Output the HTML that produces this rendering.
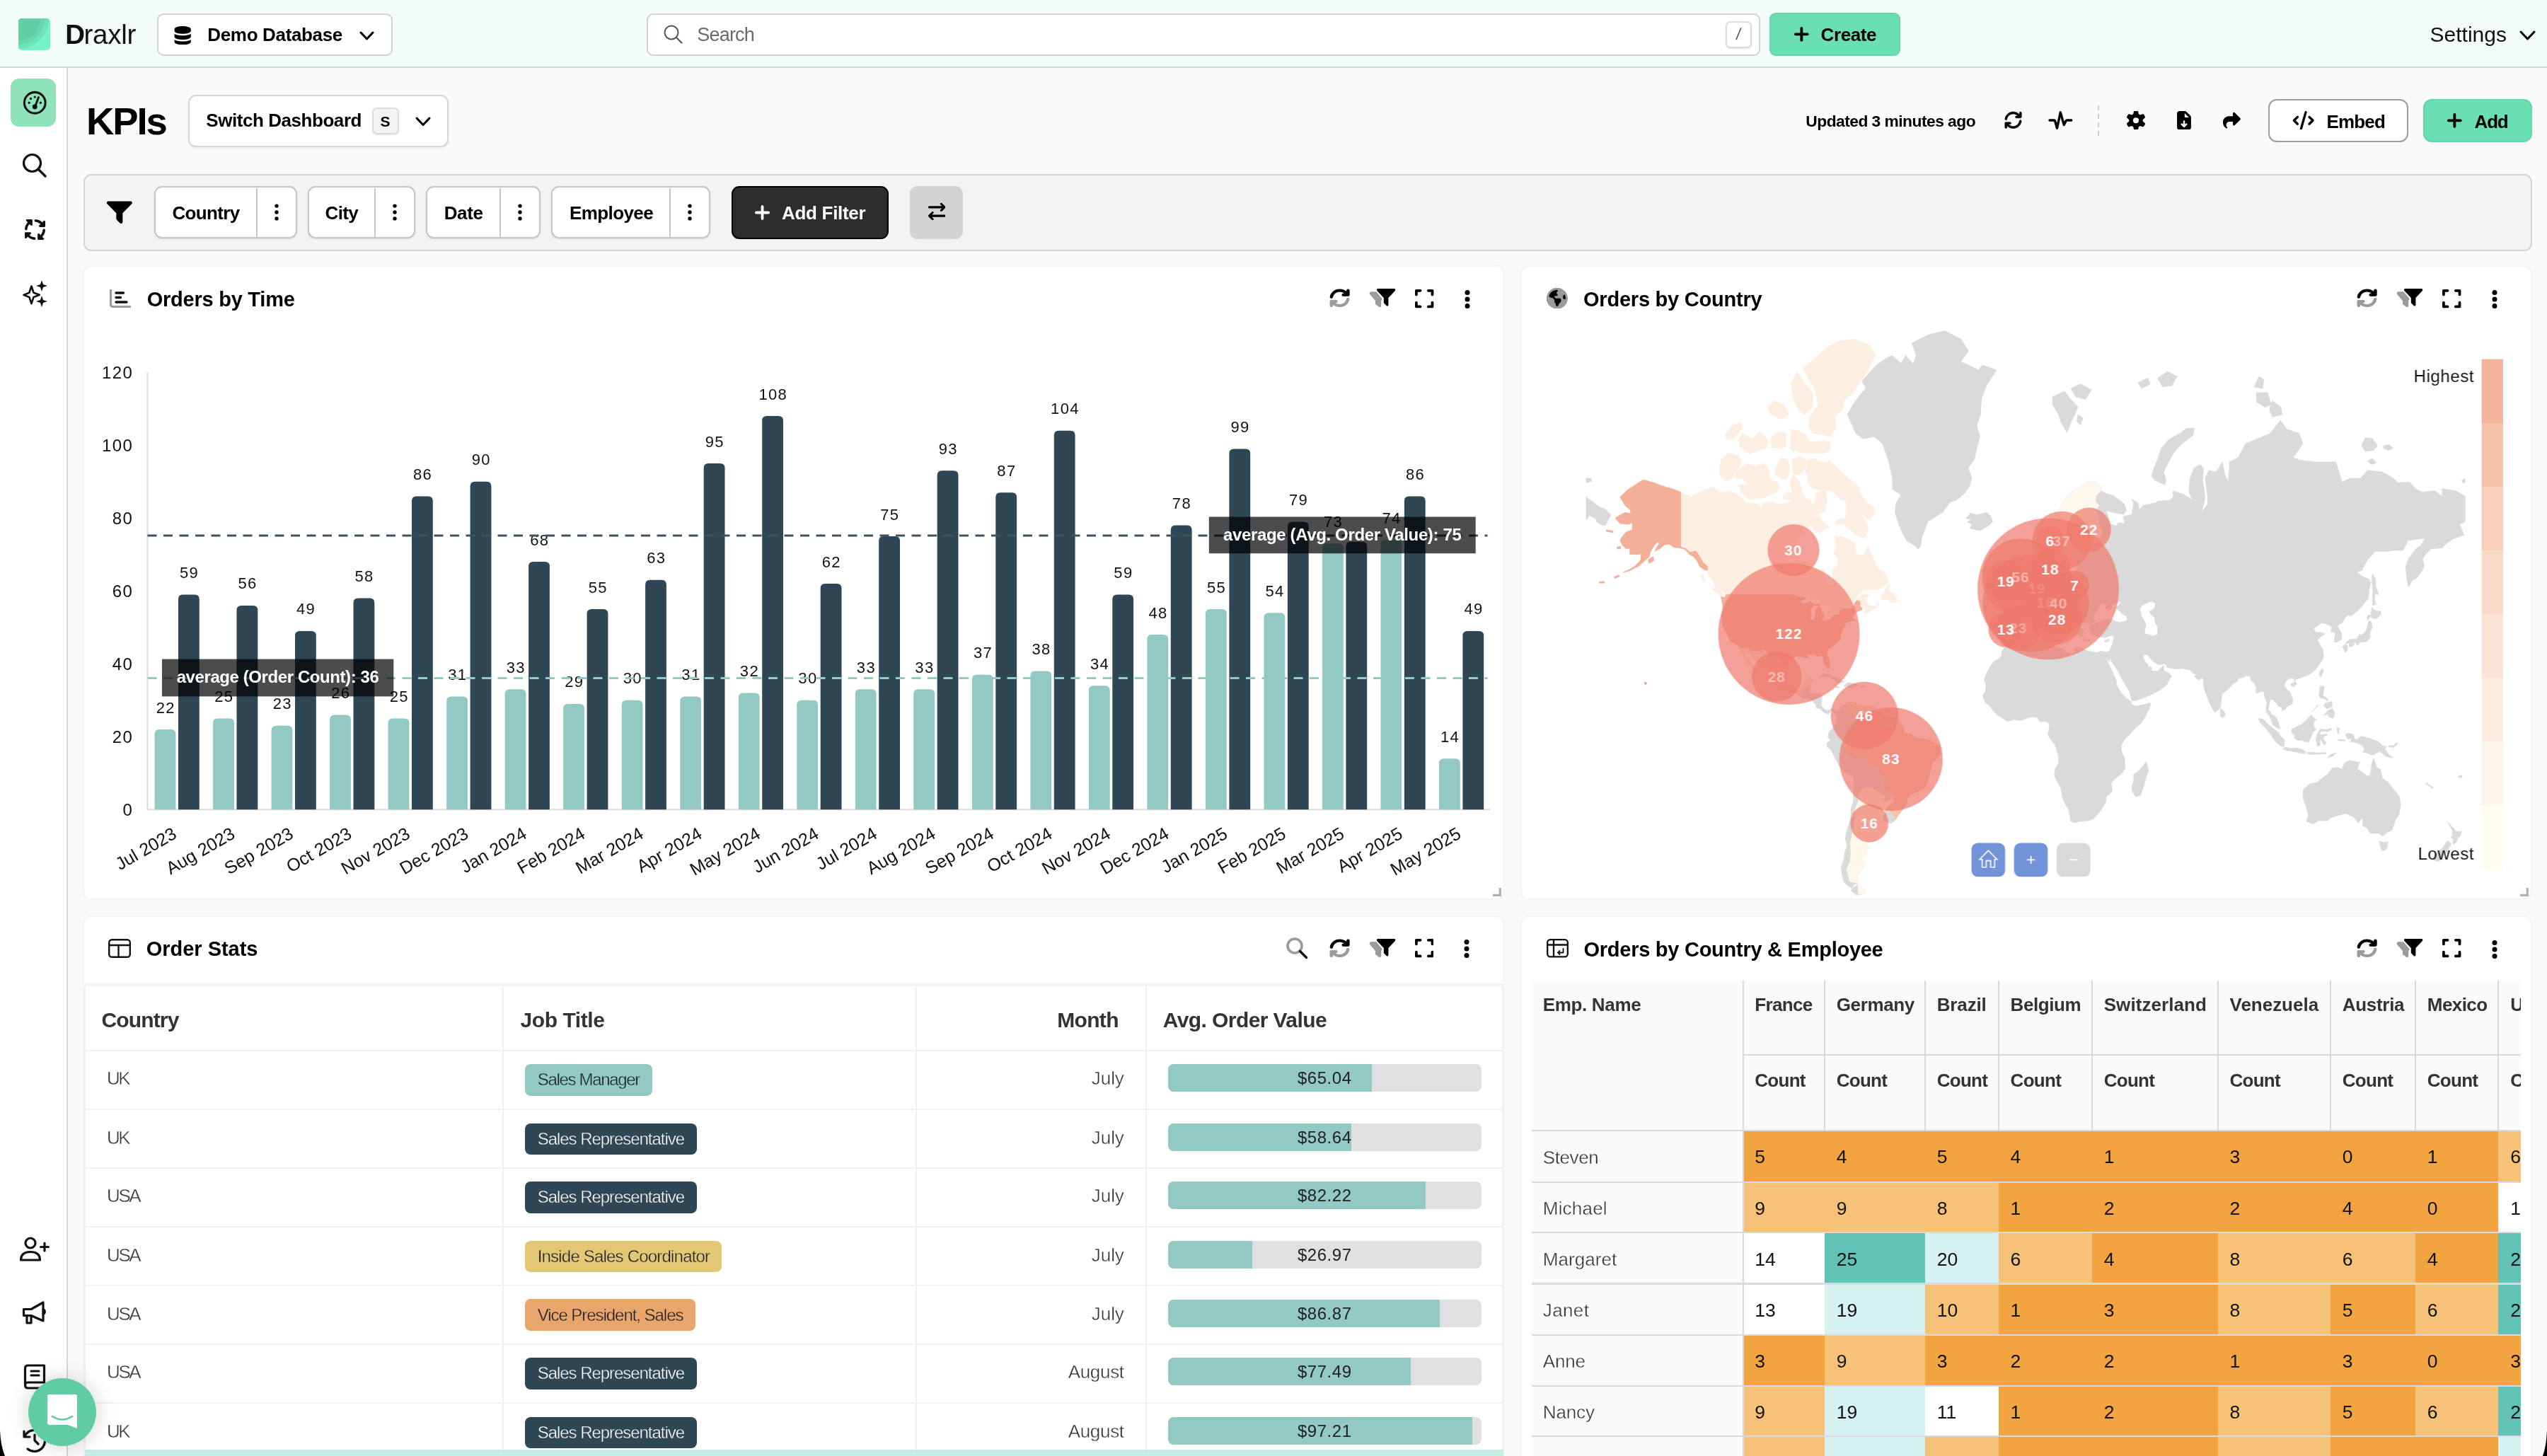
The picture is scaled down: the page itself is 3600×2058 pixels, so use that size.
<!DOCTYPE html>
<html lang="en"><head><meta charset="utf-8"><title>KPIs - Draxlr</title><style>
*{box-sizing:border-box;margin:0;padding:0}
html,body{width:3600px;height:2058px;overflow:hidden;background:#fafafa;font-family:"Liberation Sans",sans-serif;}
#root{position:relative;width:3600px;height:2058px;overflow:hidden;will-change:transform}
.t{position:absolute;white-space:nowrap;}
.b{position:absolute;}
.ic{position:absolute;display:block}
.lt{-webkit-text-stroke:0.35px #fff;}
</style></head><body><div id="root">
<div class="b" style="left:0.0px;top:0.0px;width:3600.0px;height:94.0px;background:#f3fcf9;"></div>
<div class="b" style="left:0.0px;top:94.0px;width:3600.0px;height:2.0px;background:#d6d8d7;"></div>
<svg class="ic" style="left:26px;top:26px;width:45px;height:45px" viewBox="0 0 45 45"><defs><clipPath id="lg"><rect width="45" height="45" rx="5"/></clipPath></defs><g clip-path="url(#lg)"><rect width="45" height="45" fill="#74f2c4"/><circle cx="0" cy="0" r="43" fill="#6ce3b8"/><circle cx="0" cy="0" r="37" fill="#66d8ae"/><circle cx="0" cy="0" r="31" fill="#61cea6"/></g></svg>
<div class="t " style="left:92.3px;top:29.8px;font-size:38.50px;line-height:38.50px;color:#111;font-weight:700;">D</div>
<div class="t " style="left:118.5px;top:29.8px;font-size:38.50px;line-height:38.50px;color:#111;letter-spacing:-0.272px;">raxlr</div>
<div class="b" style="left:221.7px;top:18.9px;width:333.5px;height:59.8px;background:#fff;border:2px solid #d2d2d2;border-radius:9px;"></div>
<svg class="ic" style="left:246.0px;top:36.5px;width:24.4px;height:26.5px;" viewBox="0 0 448 512" fill="#000" preserveAspectRatio="xMidYMid meet"><path d="M448 205.8c-14.8 9.8-31.8 17.7-49.5 24-47 16.8-108.7 26.2-174.5 26.2s-127.6-9.5-174.5-26.2c-17.6-6.3-34.7-14.2-49.5-24V288c0 44.2 100.3 80 224 80s224-35.8 224-80zm0-77.8V80c0-44.2-100.3-80-224-80S0 35.8 0 80v48c0 44.2 100.3 80 224 80s224-35.8 224-80m-49.5 261.8C351.6 406.5 289.9 416 224 416s-127.6-9.5-174.5-26.2c-17.6-6.3-34.7-14.2-49.5-24V432c0 44.2 100.3 80 224 80s224-35.8 224-80v-66.2c-14.8 9.8-31.8 17.7-49.5 24"/></svg>
<div class="t " style="left:293.3px;top:35.7px;font-size:26.00px;line-height:26.00px;color:#000;font-weight:700;letter-spacing:-0.337px;">Demo Database</div>
<svg class="ic" style="left:510.3px;top:45.5px;width:17.0px;height:9.0px;overflow:visible" viewBox="0 0 17.0 9.0"><path d="M0 0 L8.5 9.0 L17.0 0" fill="none" stroke="#000" stroke-width="3.0" stroke-linecap="round" stroke-linejoin="round"/></svg>
<div class="b" style="left:914.4px;top:18.9px;width:1573.2px;height:59.8px;background:#fff;border:2px solid #d2d2d2;border-radius:9px;"></div>
<svg class="ic" style="left:937.5px;top:35px;width:27px;height:27px" viewBox="0 0 27 27"><circle cx="11" cy="11" r="9.5" fill="none" stroke="#555" stroke-width="2"/><path d="M18 18 L25.5 25.5" stroke="#555" stroke-width="2.2" stroke-linecap="round"/></svg>
<div class="t " style="left:985.3px;top:36.0px;font-size:27.00px;line-height:27.00px;color:#6b6b6b;letter-spacing:-0.809px;">Search</div>
<div class="b" style="left:2438.7px;top:29.7px;width:37.6px;height:38.2px;background:#fff;border:2px solid #dcdcdc;border-radius:7px;box-shadow:0 1px 2px rgba(0,0,0,.12);"></div>
<div class="t " style="left:2454.3px;top:37.0px;font-size:23.00px;line-height:23.00px;color:#555;transform:skewX(-8deg);">/</div>
<div class="b" style="left:2501.1px;top:17.9px;width:184.8px;height:61.4px;background:#69dfb3;border:2px solid #66d3a9;border-radius:9px;"></div>
<svg class="ic" style="left:2535.5px;top:37.7px;width:20.7px;height:20.7px;overflow:visible" viewBox="0 0 20.7 20.7"><path d="M10.35 1.90 V18.80 M1.90 10.35 H18.80" fill="none" stroke="#000" stroke-width="3.8" stroke-linecap="round"/></svg>
<div class="t " style="left:2573.6px;top:36.4px;font-size:26.00px;line-height:26.00px;color:#000;font-weight:700;letter-spacing:-0.423px;">Create</div>
<div class="t " style="left:3434.6px;top:34.2px;font-size:30.00px;line-height:30.00px;color:#111;">Settings</div>
<svg class="ic" style="left:3563.0px;top:44.6px;width:19.0px;height:10.0px;overflow:visible" viewBox="0 0 19.0 10.0"><path d="M0 0 L9.5 10.0 L19.0 0" fill="none" stroke="#000" stroke-width="3.0" stroke-linecap="round" stroke-linejoin="round"/></svg>
<div class="t " style="left:121.9px;top:145.2px;font-size:54.50px;line-height:54.50px;color:#000;font-weight:700;letter-spacing:-2.091px;">KPIs</div>
<div class="b" style="left:265.9px;top:133.8px;width:367.9px;height:74.4px;background:#fff;border:2px solid #d6d6d6;border-radius:11px;box-shadow:0 1px 3px rgba(0,0,0,.08);"></div>
<div class="t " style="left:291.3px;top:156.8px;font-size:26.00px;line-height:26.00px;color:#000;font-weight:700;letter-spacing:-0.445px;">Switch Dashboard</div>
<div class="b" style="left:526.0px;top:152.0px;width:37.8px;height:37.8px;background:#f4f4f4;border:2px solid #dcdcdc;border-radius:7px;box-shadow:0 1px 2px rgba(0,0,0,.1);"></div>
<div class="t " style="left:537.5px;top:161.0px;font-size:21.00px;line-height:21.00px;color:#000;font-weight:700;">S</div>
<svg class="ic" style="left:588.5px;top:166.5px;width:18.0px;height:9.5px;overflow:visible" viewBox="0 0 18.0 9.5"><path d="M0 0 L9.0 9.5 L18.0 0" fill="none" stroke="#000" stroke-width="3.0" stroke-linecap="round" stroke-linejoin="round"/></svg>
<div class="t " style="left:2552.3px;top:159.6px;font-size:22.80px;line-height:22.80px;color:#000;font-weight:700;letter-spacing:-0.526px;">Updated 3 minutes ago</div>
<svg class="ic" style="left:2832.5px;top:158.0px;width:25.0px;height:23.5px;stroke:#000;stroke-width:12px;stroke-linejoin:round;overflow:visible;" viewBox="0 0 512 512" fill="#000" preserveAspectRatio="xMidYMid meet"><path d="M65.9 228.5C79.2 135.5 159.3 64 256 64c53 0 101 21.5 135.8 56.2l.6.6 7.6 7.2h-47.9c-17.7 0-32 14.3-32 32s14.3 32 32 32h128c17.7 0 32-14.3 32-32V32c0-17.7-14.3-32-32-32s-32 14.3-32 32v53.4l-11.3-10.7C390.5 28.6 326.5 0 256 0 127 0 20.3 95.4 2.6 219.5c-2.5 17.5 9.6 33.7 27.1 36.2s33.7-9.7 36.2-27.1zm443.5 64c2.5-17.5-9.7-33.7-27.1-36.2s-33.7 9.7-36.2 27.1c-13.3 93-93.4 164.5-190.1 164.5-53 0-101-21.5-135.8-56.2l-.6-.6-7.6-7.2h47.9c17.7 0 32-14.3 32-32s-14.3-32-32-32L32 320c-8.5 0-16.7 3.4-22.7 9.5S-.1 343.7 0 352.3l1 127c.1 17.7 14.6 31.9 32.3 31.7s31.9-14.6 31.7-32.3l-.4-51.5 10.7 10.1C121.6 483.4 185.5 512 256 512c129 0 235.7-95.4 253.4-219.5"/></svg>
<svg class="ic" style="left:2880px;top:145px;width:65px;height:50px" viewBox="0 0 65 50"><path d="M17 25 H23.200 Q24.300 25 24.700 26.200 L27.500 36.200 L32.300 13.800 L37.300 31.500 L40 26 Q40.500 25 41.600 25 H47.700" fill="none" stroke="#000" stroke-width="3.4" stroke-linecap="round" stroke-linejoin="round"/></svg>
<svg class="ic" style="left:2964.7px;top:149.4px;width:2px;height:44px" viewBox="0 0 2 44"><path d="M1 0 V44" stroke="#cfcfcf" stroke-width="2" stroke-dasharray="7 5"/></svg>
<svg class="ic" style="left:3006.3px;top:156.5px;width:26.0px;height:26.6px;" viewBox="0 0 512 512" fill="#000" preserveAspectRatio="xMidYMid meet"><path d="M195.1 9.5c3-14.8 16.1-25.5 31.3-25.5h59.8c15.2 0 28.3 10.7 31.3 25.5l14.5 70c14.1 6 27.3 13.7 39.3 22.8l67.8-22.5c14.4-4.8 30.2 1.2 37.8 14.4l29.9 51.8c7.6 13.2 4.9 29.8-6.5 39.9L447 233.3c.9 7.4 1.3 15 1.3 22.7s-.5 15.3-1.3 22.7l53.4 47.5c11.4 10.1 14 26.8 6.5 39.9L477 417.9c-7.6 13.1-23.4 19.2-37.8 14.4l-67.8-22.5c-12.1 9.1-25.3 16.7-39.3 22.8l-14.4 69.9c-3.1 14.9-16.2 25.5-31.3 25.5h-59.8c-15.2 0-28.3-10.7-31.3-25.5l-14.4-69.9c-14.1-6-27.2-13.7-39.3-22.8l-68.1 22.5c-14.4 4.8-30.2-1.2-37.8-14.4L5.8 366.1c-7.6-13.2-4.9-29.8 6.5-39.9l53.4-47.5c-.9-7.4-1.3-15-1.3-22.7s.5-15.3 1.3-22.7l-53.4-47.5C.9 175.7-1.7 159 5.8 145.9l29.9-51.8c7.6-13.2 23.4-19.2 37.8-14.4l67.8 22.5c12.1-9.1 25.3-16.7 39.3-22.8zM256.3 336a80 80 0 1 0-.6-160 80 80 0 1 0 .6 160"/></svg>
<svg class="ic" style="left:3077.0px;top:156.7px;width:20.0px;height:26.4px;" viewBox="0 0 384 512" fill="#000" preserveAspectRatio="xMidYMid meet"><path d="M0 64C0 28.7 28.7 0 64 0h149.5c17 0 33.3 6.7 45.3 18.7l106.5 106.6c12 12 18.7 28.3 18.7 45.3V448c0 35.3-28.7 64-64 64H64c-35.3 0-64-28.7-64-64zm208-5.5V152c0 13.3 10.7 24 24 24h93.5zM175 441c9.4 9.4 24.6 9.4 33.9 0l64-64c9.4-9.4 9.4-24.6 0-33.9s-24.6-9.4-33.9 0l-23 23V280c0-13.3-10.7-24-24-24s-24 10.7-24 24v86.1l-23-23c-9.4-9.4-24.6-9.4-33.9 0s-9.4 24.6 0 33.9l64 64z"/></svg>
<svg class="ic" style="left:3140.9px;top:157.5px;width:26.8px;height:25.0px;" viewBox="0 0 512 512" fill="#000" preserveAspectRatio="xMidYMid meet"><path d="M307.8 18.4C295.8 23.4 288 35 288 48v80H176C78.8 128 0 206.8 0 304c0 113.3 81.5 163.9 100.2 174.1 2.5 1.4 5.3 1.9 8.1 1.9 10.9 0 19.7-8.9 19.7-19.7 0-7.5-4.3-14.4-9.8-19.5-9.4-8.8-22.2-26.4-22.2-56.7 0-53 43-96 96-96h96v80c0 12.9 7.8 24.6 19.8 29.6s25.7 2.2 34.9-6.9l160-160c12.5-12.5 12.5-32.8 0-45.3l-160-160c-9.2-9.2-22.9-11.9-34.9-6.9z"/></svg>
<div class="b" style="left:3206.4px;top:140.3px;width:198.0px;height:61.2px;background:#fff;border:2px solid #9c9c9c;border-radius:12px;"></div>
<svg class="ic" style="left:3238.6px;top:156.5px;width:33.4px;height:26.6px;" viewBox="0 0 576 512" fill="#000" preserveAspectRatio="xMidYMid meet"><path d="M360.8 1.2c-17-4.9-34.7 5-39.6 22l-128 448c-4.9 17 5 34.7 22 39.6s34.7-5 39.6-22l128-448c4.9-17-5-34.7-22-39.6m64.6 136.1c-12.5 12.5-12.5 32.8 0 45.3l73.4 73.4-73.4 73.4c-12.5 12.5-12.5 32.8 0 45.3s32.8 12.5 45.3 0l96-96c12.5-12.5 12.5-32.8 0-45.3l-96-96c-12.5-12.5-32.8-12.5-45.3 0zm-274.7 0c-12.5-12.5-32.8-12.5-45.3 0l-96 96c-12.5 12.5-12.5 32.8 0 45.3l96 96c12.5 12.5 32.8 12.5 45.3 0s12.5-32.8 0-45.3L77.3 256l73.3-73.4c12.5-12.5 12.5-32.8 0-45.3z"/></svg>
<div class="t " style="left:3288.6px;top:159.2px;font-size:26.00px;line-height:26.00px;color:#000;font-weight:700;letter-spacing:-0.857px;">Embed</div>
<div class="b" style="left:3425.1px;top:140.3px;width:153.7px;height:61.2px;background:#69dfb3;border:2px solid #66d3a9;border-radius:12px;"></div>
<svg class="ic" style="left:3459.4px;top:160.0px;width:20.7px;height:20.7px;overflow:visible" viewBox="0 0 20.7 20.7"><path d="M10.35 1.90 V18.80 M1.90 10.35 H18.80" fill="none" stroke="#000" stroke-width="3.8" stroke-linecap="round"/></svg>
<div class="t " style="left:3497.5px;top:159.2px;font-size:26.00px;line-height:26.00px;color:#000;font-weight:700;letter-spacing:-1.147px;">Add</div>
<div class="b" style="left:118.3px;top:245.6px;width:3460.3px;height:109.5px;background:#f3f3f3;border:2px solid #d4d4d8;border-radius:11px;"></div>
<svg class="ic" style="left:150.3px;top:280.2px;width:37.7px;height:36.0px;" viewBox="0 0 512 512" fill="#000" preserveAspectRatio="xMidYMid meet"><path d="M32 64C19.1 64 7.4 71.8 2.4 83.8s-2.2 25.7 7 34.8L192 301.3V416c0 8.5 3.4 16.6 9.4 22.6l64 64c9.2 9.2 22.9 11.9 34.9 6.9S320 492.9 320 480V301.3l182.6-182.6c9.2-9.2 11.9-22.9 6.9-34.9S492.9 64 480 64z"/></svg>
<div class="b" style="left:217.8px;top:262.6px;width:202.5px;height:74.9px;background:#fff;border:2px solid #c6c6c6;border-radius:11px;box-shadow:0 1px 3px rgba(0,0,0,.1);"></div><div class="b" style="left:362.0px;top:265.5px;width:2.0px;height:69.1px;background:#c6c6c6;"></div><div class="t " style="left:243.5px;top:287.7px;font-size:26.00px;line-height:26.00px;color:#000;font-weight:700;letter-spacing:-0.652px;">Country</div><svg class="ic" style="left:385.5px;top:280.0px;width:10px;height:40px;overflow:visible" viewBox="0 0 10 40"><circle cx="5" cy="11.1" r="2.7" fill="#000"/><circle cx="5" cy="20" r="2.7" fill="#000"/><circle cx="5" cy="28.9" r="2.7" fill="#000"/></svg>
<div class="b" style="left:434.9px;top:262.6px;width:151.9px;height:74.9px;background:#fff;border:2px solid #c6c6c6;border-radius:11px;box-shadow:0 1px 3px rgba(0,0,0,.1);"></div><div class="b" style="left:529.1px;top:265.5px;width:2.0px;height:69.1px;background:#c6c6c6;"></div><div class="t " style="left:459.5px;top:287.7px;font-size:26.00px;line-height:26.00px;color:#000;font-weight:700;letter-spacing:-0.605px;">City</div><svg class="ic" style="left:553.1px;top:280.0px;width:10px;height:40px;overflow:visible" viewBox="0 0 10 40"><circle cx="5" cy="11.1" r="2.7" fill="#000"/><circle cx="5" cy="20" r="2.7" fill="#000"/><circle cx="5" cy="28.9" r="2.7" fill="#000"/></svg>
<div class="b" style="left:601.5px;top:262.6px;width:162.6px;height:74.9px;background:#fff;border:2px solid #c6c6c6;border-radius:11px;box-shadow:0 1px 3px rgba(0,0,0,.1);"></div><div class="b" style="left:706.1px;top:265.5px;width:2.0px;height:69.1px;background:#c6c6c6;"></div><div class="t " style="left:627.7px;top:287.7px;font-size:26.00px;line-height:26.00px;color:#000;font-weight:700;letter-spacing:-0.364px;">Date</div><svg class="ic" style="left:730.1px;top:280.0px;width:10px;height:40px;overflow:visible" viewBox="0 0 10 40"><circle cx="5" cy="11.1" r="2.7" fill="#000"/><circle cx="5" cy="20" r="2.7" fill="#000"/><circle cx="5" cy="28.9" r="2.7" fill="#000"/></svg>
<div class="b" style="left:778.8px;top:262.6px;width:225.2px;height:74.9px;background:#fff;border:2px solid #c6c6c6;border-radius:11px;box-shadow:0 1px 3px rgba(0,0,0,.1);"></div><div class="b" style="left:945.8px;top:265.5px;width:2.0px;height:69.1px;background:#c6c6c6;"></div><div class="t " style="left:805.0px;top:287.7px;font-size:26.00px;line-height:26.00px;color:#000;font-weight:700;letter-spacing:-0.591px;">Employee</div><svg class="ic" style="left:970.4px;top:280.0px;width:10px;height:40px;overflow:visible" viewBox="0 0 10 40"><circle cx="5" cy="11.1" r="2.7" fill="#000"/><circle cx="5" cy="20" r="2.7" fill="#000"/><circle cx="5" cy="28.9" r="2.7" fill="#000"/></svg>
<div class="b" style="left:1034.4px;top:263.0px;width:221.3px;height:74.7px;--noexp:1;background:#2d2d2d;border:2px solid #000;border-radius:11px;"></div>
<svg class="ic" style="left:1066.9px;top:289.8px;width:21.0px;height:21.0px;overflow:visible" viewBox="0 0 21.0 21.0"><path d="M10.50 1.90 V19.10 M1.90 10.50 H19.10" fill="none" stroke="#fff" stroke-width="3.8" stroke-linecap="round"/></svg>
<div class="t " style="left:1105.0px;top:287.7px;font-size:26.00px;line-height:26.00px;color:#fff;font-weight:700;letter-spacing:-0.303px;">Add Filter</div>
<div class="b" style="left:1285.9px;top:263.0px;width:75.1px;height:74.7px;background:#d4d4d4;border-radius:11px;"></div>
<svg class="ic" style="left:1311.5px;top:286.3px;width:24.5px;height:26.0px;" viewBox="0 0 512 512" fill="#000" preserveAspectRatio="xMidYMid meet"><path d="m502.6 150.6-96 96c-12.5 12.5-32.8 12.5-45.3 0s-12.5-32.8 0-45.3l41.4-41.3H32c-17.7 0-32-14.3-32-32s14.3-32 32-32h370.7l-41.4-41.4c-12.5-12.5-12.5-32.8 0-45.3s32.8-12.5 45.3 0l96 96c12.5 12.5 12.5 32.8 0 45.3m-397.3 352-96-96c-12.5-12.5-12.5-32.8 0-45.3l96-96c12.5-12.5 32.8-12.5 45.3 0s12.5 32.8 0 45.3L109.3 352H480c17.7 0 32 14.3 32 32s-14.3 32-32 32H109.3l41.4 41.4c12.5 12.5 12.5 32.8 0 45.3s-32.8 12.5-45.3 0z"/></svg>
<div class="b" style="left:116.7px;top:375.0px;width:2010.2px;height:897.3px;background:#fff;border:2px solid #f4f4f4;border-radius:12px;"></div>
<svg class="ic" style="left:155px;top:408.5px;width:30px;height:26px" viewBox="0 0 30 26"><path d="M1.500 1 V21 Q1.500 24.500 5 24.500 H29" fill="none" stroke="#9b9b9b" stroke-width="3.2" stroke-linecap="round"/><path d="M9 5 H19.500 M9 11.500 H15.500 M9 18 H24" stroke="#111" stroke-width="3.4" stroke-linecap="round"/></svg>
<div class="t " style="left:207.7px;top:409.2px;font-size:29.00px;line-height:29.00px;color:#000;font-weight:700;letter-spacing:-0.237px;">Orders by Time</div>
<svg class="ic" style="left:1880.1px;top:409.3px;width:27.1px;height:24.6px;overflow:visible" viewBox="0 0 512 512" preserveAspectRatio="none"><path d="M65.9 228.5C79.2 135.5 159.3 64 256 64c53 0 101 21.5 135.8 56.2l.6.6 7.6 7.2h-47.9c-17.7 0-32 14.3-32 32s14.3 32 32 32h128c17.7 0 32-14.3 32-32V32c0-17.7-14.3-32-32-32s-32 14.3-32 32v53.4l-11.3-10.7C390.5 28.6 326.5 0 256 0 127 0 20.3 95.4 2.6 219.5c-2.5 17.5 9.6 33.7 27.1 36.2s33.7-9.7 36.2-27.1z" fill="#000" stroke="#000" stroke-width="20" stroke-linejoin="round"/><path d="M509.4 292.5c2.5-17.5-9.7-33.7-27.1-36.2s-33.7 9.7-36.2 27.1c-13.3 93-93.4 164.5-190.1 164.5-53 0-101-21.5-135.8-56.2l-.6-.6-7.6-7.2h47.9c17.7 0 32-14.3 32-32s-14.3-32-32-32L32 320c-8.5 0-16.7 3.4-22.7 9.5S-.1 343.7 0 352.3l1 127c.1 17.7 14.6 31.9 32.3 31.7s31.9-14.6 31.7-32.3l-.4-51.5 10.7 10.1C121.6 483.4 185.5 512 256 512c129 0 235.7-95.4 253.4-219.5" fill="#9b9b9b" stroke="#9b9b9b" stroke-width="20" stroke-linejoin="round"/></svg><svg class="ic" style="left:1935.0px;top:408.3px;width:38px;height:27px;overflow:visible" viewBox="0 0 38 27"><path d="M1.500 7 L9.900 17 V21.500 L15 25.300 L16.300 24.900 V17 L17.700 14.600 L9.800 5.200 H2.500 Z" fill="#9b9b9b" stroke="#9b9b9b" stroke-width="1.8" stroke-linejoin="round"/><g transform="translate(10.9,-3.63) scale(0.0516,0.0551)"><path d="M32 64C19.1 64 7.4 71.8 2.4 83.8s-2.2 25.7 7 34.8L192 301.3V416c0 8.5 3.4 16.6 9.4 22.6l64 64c9.2 9.2 22.9 11.9 34.9 6.9S320 492.9 320 480V301.3l182.6-182.6c9.2-9.2 11.9-22.9 6.9-34.9S492.9 64 480 64z" fill="#000" stroke="#fff" stroke-width="34" paint-order="stroke"/></g></svg><svg class="ic" style="left:2000.3px;top:406.5px;width:26.4px;height:30.2px;" viewBox="0 0 448 512" fill="#000" preserveAspectRatio="xMidYMid meet"><path d="M32 32C14.3 32 0 46.3 0 64v96c0 17.7 14.3 32 32 32s32-14.3 32-32V96h64c17.7 0 32-14.3 32-32s-14.3-32-32-32zm32 320c0-17.7-14.3-32-32-32S0 334.3 0 352v96c0 17.7 14.3 32 32 32h96c17.7 0 32-14.3 32-32s-14.3-32-32-32H64zM320 32c-17.7 0-32 14.3-32 32s14.3 32 32 32h64v64c0 17.7 14.3 32 32 32s32-14.3 32-32V64c0-17.7-14.3-32-32-32zm128 320c0-17.7-14.3-32-32-32s-32 14.3-32 32v64h-64c-17.7 0-32 14.3-32 32s14.3 32 32 32h96c17.7 0 32-14.3 32-32z"/></svg><svg class="ic" style="left:2068.5px;top:402.8px;width:10px;height:40px;overflow:visible" viewBox="0 0 10 40"><circle cx="5" cy="10.6" r="3.5" fill="#000"/><circle cx="5" cy="20" r="3.5" fill="#000"/><circle cx="5" cy="29.4" r="3.5" fill="#000"/></svg>
<svg class="ic" style="left:0;top:376px;width:2126px;height:896px" viewBox="0 376 2126 896" font-family="Liberation Sans, sans-serif"><path d="M208.5 526 V1144.3 H2106.5" fill="none" stroke="#dcdcdc" stroke-width="2"/><path d="M218.6 1144.3 V1037.5 Q218.6 1031.0 225.1 1031.0 H241.9 Q248.4 1031.0 248.4 1037.5 V1144.3 Z" fill="#92c9c3"/><path d="M252.0 1144.3 V846.9 Q252.0 840.4 258.5 840.4 H275.3 Q281.8 840.4 281.8 846.9 V1144.3 Z" fill="#2f4654"/><path d="M301.1 1144.3 V1022.0 Q301.1 1015.5 307.6 1015.5 H324.4 Q330.9 1015.5 330.9 1022.0 V1144.3 Z" fill="#92c9c3"/><path d="M334.5 1144.3 V862.4 Q334.5 855.9 341.0 855.9 H357.8 Q364.3 855.9 364.3 862.4 V1144.3 Z" fill="#2f4654"/><path d="M383.6 1144.3 V1032.3 Q383.6 1025.8 390.1 1025.8 H406.9 Q413.4 1025.8 413.4 1032.3 V1144.3 Z" fill="#92c9c3"/><path d="M417.0 1144.3 V898.4 Q417.0 891.9 423.5 891.9 H440.3 Q446.8 891.9 446.8 898.4 V1144.3 Z" fill="#2f4654"/><path d="M466.1 1144.3 V1016.9 Q466.1 1010.4 472.6 1010.4 H489.4 Q495.9 1010.4 495.9 1016.9 V1144.3 Z" fill="#92c9c3"/><path d="M499.5 1144.3 V852.1 Q499.5 845.6 506.0 845.6 H522.8 Q529.3 845.6 529.3 852.1 V1144.3 Z" fill="#2f4654"/><path d="M548.6 1144.3 V1022.0 Q548.6 1015.5 555.1 1015.5 H571.9 Q578.4 1015.5 578.4 1022.0 V1144.3 Z" fill="#92c9c3"/><path d="M582.0 1144.3 V707.9 Q582.0 701.4 588.5 701.4 H605.3 Q611.8 701.4 611.8 707.9 V1144.3 Z" fill="#2f4654"/><path d="M631.2 1144.3 V991.1 Q631.2 984.6 637.7 984.6 H654.5 Q661.0 984.6 661.0 991.1 V1144.3 Z" fill="#92c9c3"/><path d="M664.6 1144.3 V687.3 Q664.6 680.8 671.1 680.8 H687.9 Q694.4 680.8 694.4 687.3 V1144.3 Z" fill="#2f4654"/><path d="M713.7 1144.3 V980.8 Q713.7 974.3 720.2 974.3 H737.0 Q743.5 974.3 743.5 980.8 V1144.3 Z" fill="#92c9c3"/><path d="M747.1 1144.3 V800.6 Q747.1 794.1 753.6 794.1 H770.4 Q776.9 794.1 776.9 800.6 V1144.3 Z" fill="#2f4654"/><path d="M796.2 1144.3 V1001.4 Q796.2 994.9 802.7 994.9 H819.5 Q826.0 994.9 826.0 1001.4 V1144.3 Z" fill="#92c9c3"/><path d="M829.6 1144.3 V867.5 Q829.6 861.0 836.1 861.0 H852.9 Q859.4 861.0 859.4 867.5 V1144.3 Z" fill="#2f4654"/><path d="M878.7 1144.3 V996.3 Q878.7 989.8 885.2 989.8 H902.0 Q908.5 989.8 908.5 996.3 V1144.3 Z" fill="#92c9c3"/><path d="M912.1 1144.3 V826.3 Q912.1 819.8 918.6 819.8 H935.4 Q941.9 819.8 941.9 826.3 V1144.3 Z" fill="#2f4654"/><path d="M961.3 1144.3 V991.1 Q961.3 984.6 967.8 984.6 H984.6 Q991.1 984.6 991.1 991.1 V1144.3 Z" fill="#92c9c3"/><path d="M994.7 1144.3 V661.5 Q994.7 655.0 1001.2 655.0 H1018.0 Q1024.5 655.0 1024.5 661.5 V1144.3 Z" fill="#2f4654"/><path d="M1043.8 1144.3 V986.0 Q1043.8 979.5 1050.3 979.5 H1067.1 Q1073.6 979.5 1073.6 986.0 V1144.3 Z" fill="#92c9c3"/><path d="M1077.2 1144.3 V594.6 Q1077.2 588.1 1083.7 588.1 H1100.5 Q1107.0 588.1 1107.0 594.6 V1144.3 Z" fill="#2f4654"/><path d="M1126.3 1144.3 V996.3 Q1126.3 989.8 1132.8 989.8 H1149.6 Q1156.1 989.8 1156.1 996.3 V1144.3 Z" fill="#92c9c3"/><path d="M1159.7 1144.3 V831.5 Q1159.7 825.0 1166.2 825.0 H1183.0 Q1189.5 825.0 1189.5 831.5 V1144.3 Z" fill="#2f4654"/><path d="M1208.8 1144.3 V980.8 Q1208.8 974.3 1215.3 974.3 H1232.1 Q1238.6 974.3 1238.6 980.8 V1144.3 Z" fill="#92c9c3"/><path d="M1242.2 1144.3 V764.5 Q1242.2 758.0 1248.7 758.0 H1265.5 Q1272.0 758.0 1272.0 764.5 V1144.3 Z" fill="#2f4654"/><path d="M1291.3 1144.3 V980.8 Q1291.3 974.3 1297.8 974.3 H1314.6 Q1321.1 974.3 1321.1 980.8 V1144.3 Z" fill="#92c9c3"/><path d="M1324.7 1144.3 V671.8 Q1324.7 665.3 1331.2 665.3 H1348.0 Q1354.5 665.3 1354.5 671.8 V1144.3 Z" fill="#2f4654"/><path d="M1373.9 1144.3 V960.2 Q1373.9 953.8 1380.4 953.8 H1397.2 Q1403.7 953.8 1403.7 960.2 V1144.3 Z" fill="#92c9c3"/><path d="M1407.3 1144.3 V702.8 Q1407.3 696.2 1413.8 696.2 H1430.6 Q1437.1 696.2 1437.1 702.8 V1144.3 Z" fill="#2f4654"/><path d="M1456.4 1144.3 V955.1 Q1456.4 948.6 1462.9 948.6 H1479.7 Q1486.2 948.6 1486.2 955.1 V1144.3 Z" fill="#92c9c3"/><path d="M1489.8 1144.3 V615.2 Q1489.8 608.7 1496.3 608.7 H1513.1 Q1519.6 608.7 1519.6 615.2 V1144.3 Z" fill="#2f4654"/><path d="M1538.9 1144.3 V975.7 Q1538.9 969.2 1545.4 969.2 H1562.2 Q1568.7 969.2 1568.7 975.7 V1144.3 Z" fill="#92c9c3"/><path d="M1572.3 1144.3 V846.9 Q1572.3 840.4 1578.8 840.4 H1595.6 Q1602.1 840.4 1602.1 846.9 V1144.3 Z" fill="#2f4654"/><path d="M1621.4 1144.3 V903.6 Q1621.4 897.1 1627.9 897.1 H1644.7 Q1651.2 897.1 1651.2 903.6 V1144.3 Z" fill="#92c9c3"/><path d="M1654.8 1144.3 V749.1 Q1654.8 742.6 1661.3 742.6 H1678.1 Q1684.6 742.6 1684.6 749.1 V1144.3 Z" fill="#2f4654"/><path d="M1704.0 1144.3 V867.5 Q1704.0 861.0 1710.5 861.0 H1727.3 Q1733.8 861.0 1733.8 867.5 V1144.3 Z" fill="#92c9c3"/><path d="M1737.4 1144.3 V640.9 Q1737.4 634.4 1743.9 634.4 H1760.7 Q1767.2 634.4 1767.2 640.9 V1144.3 Z" fill="#2f4654"/><path d="M1786.5 1144.3 V872.7 Q1786.5 866.2 1793.0 866.2 H1809.8 Q1816.3 866.2 1816.3 872.7 V1144.3 Z" fill="#92c9c3"/><path d="M1819.9 1144.3 V743.9 Q1819.9 737.4 1826.4 737.4 H1843.2 Q1849.7 737.4 1849.7 743.9 V1144.3 Z" fill="#2f4654"/><path d="M1869.0 1144.3 V774.8 Q1869.0 768.3 1875.5 768.3 H1892.3 Q1898.8 768.3 1898.8 774.8 V1144.3 Z" fill="#92c9c3"/><path d="M1902.4 1144.3 V772.3 Q1902.4 765.8 1908.9 765.8 H1925.7 Q1932.2 765.8 1932.2 772.3 V1144.3 Z" fill="#2f4654"/><path d="M1951.5 1144.3 V769.7 Q1951.5 763.2 1958.0 763.2 H1974.8 Q1981.3 763.2 1981.3 769.7 V1144.3 Z" fill="#92c9c3"/><path d="M1984.9 1144.3 V707.9 Q1984.9 701.4 1991.4 701.4 H2008.2 Q2014.7 701.4 2014.7 707.9 V1144.3 Z" fill="#2f4654"/><path d="M2034.0 1144.3 V1078.7 Q2034.0 1072.2 2040.5 1072.2 H2057.3 Q2063.8 1072.2 2063.8 1078.7 V1144.3 Z" fill="#92c9c3"/><path d="M2067.4 1144.3 V898.4 Q2067.4 891.9 2073.9 891.9 H2090.7 Q2097.2 891.9 2097.2 898.4 V1144.3 Z" fill="#2f4654"/><text x="234.2" y="1007.5" font-size="22" letter-spacing="1.3" text-anchor="middle" fill="#111">22</text><text x="267.6" y="816.9" font-size="22" letter-spacing="1.3" text-anchor="middle" fill="#111">59</text><text transform="translate(251.3,1183.3) rotate(-30)" font-size="25" text-anchor="end" fill="#111">Jul 2023</text><text x="316.7" y="992.0" font-size="22" letter-spacing="1.3" text-anchor="middle" fill="#111">25</text><text x="350.1" y="832.4" font-size="22" letter-spacing="1.3" text-anchor="middle" fill="#111">56</text><text transform="translate(333.8,1183.3) rotate(-30)" font-size="25" text-anchor="end" fill="#111">Aug 2023</text><text x="399.2" y="1002.3" font-size="22" letter-spacing="1.3" text-anchor="middle" fill="#111">23</text><text x="432.6" y="868.4" font-size="22" letter-spacing="1.3" text-anchor="middle" fill="#111">49</text><text transform="translate(416.3,1183.3) rotate(-30)" font-size="25" text-anchor="end" fill="#111">Sep 2023</text><text x="481.7" y="986.9" font-size="22" letter-spacing="1.3" text-anchor="middle" fill="#111">26</text><text x="515.1" y="822.1" font-size="22" letter-spacing="1.3" text-anchor="middle" fill="#111">58</text><text transform="translate(498.8,1183.3) rotate(-30)" font-size="25" text-anchor="end" fill="#111">Oct 2023</text><text x="564.2" y="992.0" font-size="22" letter-spacing="1.3" text-anchor="middle" fill="#111">25</text><text x="597.6" y="677.9" font-size="22" letter-spacing="1.3" text-anchor="middle" fill="#111">86</text><text transform="translate(581.3,1183.3) rotate(-30)" font-size="25" text-anchor="end" fill="#111">Nov 2023</text><text x="646.8" y="961.1" font-size="22" letter-spacing="1.3" text-anchor="middle" fill="#111">31</text><text x="680.2" y="657.3" font-size="22" letter-spacing="1.3" text-anchor="middle" fill="#111">90</text><text transform="translate(663.9,1183.3) rotate(-30)" font-size="25" text-anchor="end" fill="#111">Dec 2023</text><text x="729.3" y="950.8" font-size="22" letter-spacing="1.3" text-anchor="middle" fill="#111">33</text><text x="762.7" y="770.6" font-size="22" letter-spacing="1.3" text-anchor="middle" fill="#111">68</text><text transform="translate(746.4,1183.3) rotate(-30)" font-size="25" text-anchor="end" fill="#111">Jan 2024</text><text x="811.8" y="971.4" font-size="22" letter-spacing="1.3" text-anchor="middle" fill="#111">29</text><text x="845.2" y="837.5" font-size="22" letter-spacing="1.3" text-anchor="middle" fill="#111">55</text><text transform="translate(828.9,1183.3) rotate(-30)" font-size="25" text-anchor="end" fill="#111">Feb 2024</text><text x="894.3" y="966.3" font-size="22" letter-spacing="1.3" text-anchor="middle" fill="#111">30</text><text x="927.7" y="796.3" font-size="22" letter-spacing="1.3" text-anchor="middle" fill="#111">63</text><text transform="translate(911.4,1183.3) rotate(-30)" font-size="25" text-anchor="end" fill="#111">Mar 2024</text><text x="976.9" y="961.1" font-size="22" letter-spacing="1.3" text-anchor="middle" fill="#111">31</text><text x="1010.3" y="631.5" font-size="22" letter-spacing="1.3" text-anchor="middle" fill="#111">95</text><text transform="translate(994.0,1183.3) rotate(-30)" font-size="25" text-anchor="end" fill="#111">Apr 2024</text><text x="1059.4" y="956.0" font-size="22" letter-spacing="1.3" text-anchor="middle" fill="#111">32</text><text x="1092.8" y="564.6" font-size="22" letter-spacing="1.3" text-anchor="middle" fill="#111">108</text><text transform="translate(1076.5,1183.3) rotate(-30)" font-size="25" text-anchor="end" fill="#111">May 2024</text><text x="1141.9" y="966.3" font-size="22" letter-spacing="1.3" text-anchor="middle" fill="#111">30</text><text x="1175.3" y="801.5" font-size="22" letter-spacing="1.3" text-anchor="middle" fill="#111">62</text><text transform="translate(1159.0,1183.3) rotate(-30)" font-size="25" text-anchor="end" fill="#111">Jun 2024</text><text x="1224.4" y="950.8" font-size="22" letter-spacing="1.3" text-anchor="middle" fill="#111">33</text><text x="1257.8" y="734.5" font-size="22" letter-spacing="1.3" text-anchor="middle" fill="#111">75</text><text transform="translate(1241.5,1183.3) rotate(-30)" font-size="25" text-anchor="end" fill="#111">Jul 2024</text><text x="1306.9" y="950.8" font-size="22" letter-spacing="1.3" text-anchor="middle" fill="#111">33</text><text x="1340.3" y="641.8" font-size="22" letter-spacing="1.3" text-anchor="middle" fill="#111">93</text><text transform="translate(1324.0,1183.3) rotate(-30)" font-size="25" text-anchor="end" fill="#111">Aug 2024</text><text x="1389.5" y="930.2" font-size="22" letter-spacing="1.3" text-anchor="middle" fill="#111">37</text><text x="1422.9" y="672.8" font-size="22" letter-spacing="1.3" text-anchor="middle" fill="#111">87</text><text transform="translate(1406.6,1183.3) rotate(-30)" font-size="25" text-anchor="end" fill="#111">Sep 2024</text><text x="1472.0" y="925.1" font-size="22" letter-spacing="1.3" text-anchor="middle" fill="#111">38</text><text x="1505.4" y="585.2" font-size="22" letter-spacing="1.3" text-anchor="middle" fill="#111">104</text><text transform="translate(1489.1,1183.3) rotate(-30)" font-size="25" text-anchor="end" fill="#111">Oct 2024</text><text x="1554.5" y="945.7" font-size="22" letter-spacing="1.3" text-anchor="middle" fill="#111">34</text><text x="1587.9" y="816.9" font-size="22" letter-spacing="1.3" text-anchor="middle" fill="#111">59</text><text transform="translate(1571.6,1183.3) rotate(-30)" font-size="25" text-anchor="end" fill="#111">Nov 2024</text><text x="1637.0" y="873.6" font-size="22" letter-spacing="1.3" text-anchor="middle" fill="#111">48</text><text x="1670.4" y="719.1" font-size="22" letter-spacing="1.3" text-anchor="middle" fill="#111">78</text><text transform="translate(1654.1,1183.3) rotate(-30)" font-size="25" text-anchor="end" fill="#111">Dec 2024</text><text x="1719.6" y="837.5" font-size="22" letter-spacing="1.3" text-anchor="middle" fill="#111">55</text><text x="1753.0" y="610.9" font-size="22" letter-spacing="1.3" text-anchor="middle" fill="#111">99</text><text transform="translate(1736.7,1183.3) rotate(-30)" font-size="25" text-anchor="end" fill="#111">Jan 2025</text><text x="1802.1" y="842.7" font-size="22" letter-spacing="1.3" text-anchor="middle" fill="#111">54</text><text x="1835.5" y="713.9" font-size="22" letter-spacing="1.3" text-anchor="middle" fill="#111">79</text><text transform="translate(1819.2,1183.3) rotate(-30)" font-size="25" text-anchor="end" fill="#111">Feb 2025</text><text x="1884.6" y="744.8" font-size="22" letter-spacing="1.3" text-anchor="middle" fill="#111">73</text><text transform="translate(1901.7,1183.3) rotate(-30)" font-size="25" text-anchor="end" fill="#111">Mar 2025</text><text x="1967.1" y="739.7" font-size="22" letter-spacing="1.3" text-anchor="middle" fill="#111">74</text><text x="2000.5" y="677.9" font-size="22" letter-spacing="1.3" text-anchor="middle" fill="#111">86</text><text transform="translate(1984.2,1183.3) rotate(-30)" font-size="25" text-anchor="end" fill="#111">Apr 2025</text><text x="2049.6" y="1048.7" font-size="22" letter-spacing="1.3" text-anchor="middle" fill="#111">14</text><text x="2083.0" y="868.4" font-size="22" letter-spacing="1.3" text-anchor="middle" fill="#111">49</text><text transform="translate(2066.7,1183.3) rotate(-30)" font-size="25" text-anchor="end" fill="#111">May 2025</text><text x="188.300" y="1152.6" font-size="24" letter-spacing="1.4" text-anchor="end" fill="#111">0</text><text x="188.300" y="1049.6" font-size="24" letter-spacing="1.4" text-anchor="end" fill="#111">20</text><text x="188.300" y="946.6" font-size="24" letter-spacing="1.4" text-anchor="end" fill="#111">40</text><text x="188.300" y="843.6" font-size="24" letter-spacing="1.4" text-anchor="end" fill="#111">60</text><text x="188.300" y="740.6" font-size="24" letter-spacing="1.4" text-anchor="end" fill="#111">80</text><text x="188.300" y="637.6" font-size="24" letter-spacing="1.4" text-anchor="end" fill="#111">100</text><text x="188.300" y="534.6" font-size="24" letter-spacing="1.4" text-anchor="end" fill="#111">120</text><path d="M208.5 757.0 H2102.5" stroke="#3d5563" stroke-width="3" stroke-dasharray="13 9.500"/><path d="M208.5 958.4 H2102.5" stroke="#93cbc4" stroke-width="3" stroke-dasharray="13 9.500"/><rect x="229" y="931.6" width="327.3" height="52.8" fill="rgba(0,0,0,0.7)"/><rect x="1708.8" y="730.5" width="376.9" height="51.7" fill="rgba(0,0,0,0.7)"/></svg>
<div class="t " style="left:249.7px;top:945.4px;font-size:24.00px;line-height:24.00px;color:#fff;font-weight:700;letter-spacing:-0.415px;">average (Order Count): 36</div>
<div class="t " style="left:1729.0px;top:743.7px;font-size:24.00px;line-height:24.00px;color:#fff;font-weight:700;letter-spacing:-0.362px;">average (Avg. Order Value): 75</div>
<svg class="ic" style="left:2110px;top:1255px;width:12px;height:12px" viewBox="0 0 12 12"><path d="M10.300 0 V10.300 H0" fill="none" stroke="#b0b0b0" stroke-width="3.2"/></svg>
<div class="b" style="left:2148.5px;top:375.0px;width:1430.4px;height:897.3px;background:#fff;border:2px solid #f4f4f4;border-radius:12px;"></div>
<svg class="ic" style="left:2151.400px;top:440px;width:1424.600px;height:829.400px" viewBox="2151.400 440 1424.600 829.400" font-family="Liberation Sans, sans-serif"><defs><clipPath id="mc"><rect x="2242" y="440" width="1243" height="830"/></clipPath></defs><g clip-path="url(#mc)"><path d="M2376.6 695.7L2362.8 690.6L2349.0 686.6L2338.6 682.4L2323.1 678.1L2314.5 683.4L2300.7 692.7L2290.3 702.5L2297.2 714.6L2304.1 720.0L2305.8 726.1L2297.2 724.3L2283.4 732.0L2290.3 740.2L2302.4 741.0L2307.6 738.6L2307.6 748.9L2298.9 752.0L2292.0 760.2L2290.3 763.8L2293.8 771.0L2298.9 775.8L2304.1 775.1L2304.1 783.3L2314.5 783.9L2319.7 782.6L2319.7 791.1L2311.0 800.5L2302.4 805.4L2294.4 809.0L2304.1 806.6L2316.2 800.5L2324.8 793.0L2331.7 786.6L2333.5 779.2L2338.6 771.0L2343.8 766.0L2345.6 768.1L2339.3 779.2L2347.3 775.1L2352.5 770.3L2359.4 768.9L2366.3 773.8L2374.9 774.4L2381.8 776.5L2388.7 783.9L2393.9 786.6L2399.1 793.0L2402.5 800.5L2409.4 805.4L2414.6 806.6L2414.6 800.5L2407.7 794.3L2402.5 784.6L2397.3 777.9L2388.7 779.9L2383.5 774.4L2376.6 772.4Z" fill="#f3af97" stroke="#f3af97" stroke-width="0.8" stroke-linejoin="round"/><path d="M2376.6 695.7L2390.4 702.5L2397.3 698.6L2411.2 691.7L2421.5 688.6L2431.9 696.6L2445.7 693.7L2459.5 701.5L2468.1 710.0L2483.7 711.9L2490.6 720.0L2492.3 710.9L2504.4 709.1L2514.7 712.8L2525.1 711.9L2532.0 708.2L2533.7 696.6L2530.3 679.2L2535.5 671.5L2544.1 681.3L2547.6 695.7L2552.7 704.4L2559.6 708.2L2563.1 717.3L2568.3 696.6L2580.4 693.7L2582.8 706.3L2580.4 721.7L2573.4 726.1L2566.5 728.6L2566.5 743.4L2559.6 744.2L2551.0 748.1L2544.1 756.5L2538.9 767.4L2536.5 781.3L2544.1 794.3L2552.7 794.3L2563.1 800.5L2570.0 804.8L2579.3 806.0L2580.4 818.4L2583.8 826.9L2590.7 826.3L2591.4 815.5L2589.0 807.8L2595.9 800.5L2599.0 791.1L2592.4 782.6L2595.9 774.4L2594.2 757.2L2604.5 758.7L2614.9 763.8L2621.8 767.4L2623.5 782.6L2628.7 785.2L2635.6 782.6L2640.1 771.7L2646.0 784.6L2651.1 797.4L2656.3 804.8L2663.2 808.4L2666.7 815.5L2670.8 821.2L2668.4 826.3L2661.5 828.5L2656.3 833.4L2642.5 833.4L2633.9 834.0L2627.0 840.4L2620.1 849.2L2617.6 851.7L2623.5 846.1L2632.1 840.9L2640.8 839.8L2640.8 844.5L2635.6 845.6L2639.1 850.7L2640.8 854.7L2644.2 856.2L2651.1 857.2L2656.3 855.7L2654.6 850.7L2652.9 859.2L2646.0 862.1L2640.8 865.9L2635.6 867.9L2635.6 863.1L2640.8 859.2L2637.3 859.2L2632.1 860.1L2629.4 856.7L2629.4 850.2L2624.6 848.7L2621.8 853.2L2619.0 859.2L2616.6 860.6L2604.5 860.6L2600.0 864.5L2598.3 867.4L2590.7 868.3L2590.7 871.2L2578.6 876.3L2576.6 874.4L2579.0 870.2L2578.6 859.2L2575.2 856.7L2573.1 854.2L2570.7 851.7L2558.6 844.5L2554.5 845.6L2545.8 844.0L2536.8 841.9L2534.8 840.4L2439.5 840.4L2438.1 838.8L2432.6 834.0L2425.0 829.6L2421.5 821.2L2416.3 815.5L2413.6 809.6L2414.6 806.6L2414.6 800.5L2407.7 794.3L2402.5 784.6L2397.3 777.9L2388.7 779.9L2383.5 774.4L2376.6 772.4Z" fill="#fdeee2" stroke="#fdeee2" stroke-width="0.8" stroke-linejoin="round"/><path d="M2432.9 843.5L2438.8 844.5L2439.5 840.4L2534.8 840.4L2536.8 841.9L2545.8 844.0L2554.5 845.6L2558.6 844.5L2570.7 851.7L2573.1 854.2L2575.2 856.7L2578.6 859.2L2579.0 870.2L2576.6 874.4L2578.6 876.3L2590.7 871.2L2590.7 868.3L2598.3 867.4L2600.0 864.5L2604.5 860.6L2616.6 860.6L2619.0 859.2L2621.8 853.2L2624.6 848.7L2629.4 850.2L2629.4 856.7L2632.1 860.1L2632.1 862.1L2627.0 864.0L2621.8 866.9L2619.4 871.2L2618.7 874.9L2621.8 875.8L2621.8 877.2L2616.6 877.7L2609.7 880.0L2608.0 881.3L2607.3 886.3L2604.5 889.0L2603.8 893.0L2601.1 897.3L2602.1 903.3L2598.3 907.1L2594.2 910.4L2590.0 913.8L2584.2 918.3L2582.4 923.5L2585.5 932.3L2587.3 938.9L2585.9 945.0L2583.1 945.0L2581.0 942.0L2577.6 935.0L2577.9 930.3L2574.1 926.3L2570.0 927.9L2564.8 924.7L2559.6 925.1L2554.5 925.5L2555.5 929.9L2551.0 929.5L2545.8 927.9L2538.9 927.9L2535.5 929.9L2528.6 935.0L2527.5 942.0L2521.0 940.0L2516.5 932.3L2513.0 927.1L2507.8 930.3L2502.7 927.9L2495.8 919.1L2489.9 919.1L2489.9 921.1L2480.2 921.1L2467.1 916.2L2459.2 916.2L2458.5 913.8L2454.7 910.9L2450.9 908.4L2447.1 907.5L2442.6 899.0L2440.5 893.8L2438.8 891.6L2436.0 886.3L2434.3 882.3L2435.0 874.9L2433.6 871.2L2435.3 862.6L2435.3 854.7Z" fill="#f3af97" stroke="#f3af97" stroke-width="0.8" stroke-linejoin="round"/><path d="M2459.2 916.2L2467.1 916.2L2480.2 921.1L2489.9 921.1L2489.9 919.1L2495.8 919.1L2502.7 927.9L2507.8 930.3L2513.0 927.1L2516.5 932.3L2521.0 940.0L2527.5 942.0L2525.8 949.6L2525.8 956.0L2527.9 962.7L2532.0 968.2L2537.2 971.1L2545.8 969.6L2550.3 967.1L2551.3 960.8L2559.6 958.6L2563.8 960.1L2561.4 966.3L2560.3 971.1L2558.6 970.0L2555.8 972.2L2549.3 972.5L2549.3 974.7L2551.0 978.7L2545.1 984.0L2538.9 979.0L2530.3 980.1L2521.7 976.9L2513.0 973.2L2506.1 970.7L2499.2 965.2L2499.2 959.0L2495.8 952.2L2490.6 945.8L2485.7 939.3L2481.9 934.6L2476.1 930.3L2473.3 922.3L2467.1 919.1L2467.4 926.3L2473.3 934.2L2478.5 942.0L2481.9 948.5L2485.4 953.0L2483.0 953.4L2476.8 946.6L2475.7 941.2L2468.1 936.2L2469.2 931.9L2463.6 925.1L2460.5 919.9Z" fill="#fbe3d3" stroke="#fbe3d3" stroke-width="0.8" stroke-linejoin="round"/><path d="M2545.1 984.0L2551.0 978.7L2549.3 974.7L2549.3 972.5L2555.8 972.2L2558.6 970.0L2558.9 973.6L2557.2 979.0L2559.6 980.1L2566.5 979.4L2573.4 980.8L2576.2 982.6L2575.2 989.7L2574.5 996.8L2578.6 1002.0L2583.8 1004.5L2589.0 1001.7L2594.2 1002.7L2596.6 1005.2L2595.9 1009.0L2593.1 1007.3L2589.0 1004.1L2586.2 1006.6L2585.5 1009.7L2581.4 1008.3L2576.9 1006.2L2573.4 1002.0L2567.6 1000.3L2567.2 996.8L2561.4 990.1L2557.9 989.0L2552.7 987.2L2547.6 986.2Z" fill="#dadada" stroke="#dadada" stroke-width="0.8" stroke-linejoin="round"/><path d="M2570.3 957.5L2576.9 953.4L2583.8 953.0L2590.7 955.6L2597.6 959.0L2602.8 961.9L2607.3 963.8L2602.8 964.9L2595.9 964.9L2594.2 961.9L2589.0 958.6L2582.1 956.4L2575.2 956.4Z" fill="#dadada" stroke="#dadada" stroke-width="0.8" stroke-linejoin="round"/><path d="M2606.6 970.3L2611.4 964.9L2616.6 964.9L2623.5 966.7L2627.3 969.6L2623.5 970.3L2618.3 972.9L2613.2 971.4Z" fill="#dadada" stroke="#dadada" stroke-width="0.8" stroke-linejoin="round"/><path d="M2593.1 970.7L2597.6 970.0L2600.4 971.8L2596.6 972.5Z" fill="#dadada" stroke="#dadada" stroke-width="0.8" stroke-linejoin="round"/><path d="M2631.5 970.3L2636.6 970.3L2636.6 971.8L2631.5 971.8Z" fill="#dadada" stroke="#dadada" stroke-width="0.8" stroke-linejoin="round"/><path d="M2596.6 1005.2L2601.1 1002.7L2604.5 997.8L2608.0 996.1L2613.2 993.6L2617.3 991.8L2616.6 996.8L2621.8 994.7L2622.5 992.6L2627.0 997.5L2635.6 998.2L2640.8 999.6L2647.7 997.8L2650.1 1000.3L2653.6 1005.2L2659.8 1007.3L2665.0 1013.5L2673.6 1014.6L2680.5 1016.0L2685.7 1019.8L2690.8 1028.8L2690.8 1035.0L2696.0 1037.4L2701.2 1037.4L2709.8 1042.9L2718.5 1044.7L2725.4 1045.0L2732.3 1048.8L2737.5 1052.6L2742.0 1054.0L2743.3 1061.0L2742.0 1068.0L2735.7 1075.0L2730.6 1080.3L2728.8 1089.2L2727.1 1098.2L2723.7 1107.3L2721.9 1112.9L2715.0 1116.6L2708.1 1119.7L2701.2 1123.1L2696.0 1128.0L2695.3 1135.8L2690.8 1142.9L2683.9 1151.7L2678.8 1160.0L2673.6 1163.7L2666.7 1162.1L2661.8 1160.0L2666.0 1166.3L2667.4 1170.5L2663.9 1177.9L2656.3 1181.0L2649.4 1181.5L2648.4 1189.6L2639.1 1190.5L2639.1 1197.4L2643.5 1197.4L2638.4 1202.1L2637.3 1209.4L2630.4 1214.3L2636.3 1221.9L2630.4 1232.3L2625.2 1239.3L2627.3 1248.2L2620.1 1250.5L2618.3 1256.2L2611.4 1251.6L2606.3 1245.9L2603.8 1235.0L2602.8 1224.4L2606.3 1216.8L2608.0 1204.5L2611.4 1195.1L2608.7 1185.9L2610.4 1174.9L2613.2 1166.3L2616.6 1155.8L2616.6 1143.7L2620.1 1131.9L2620.4 1118.5L2621.1 1105.5L2620.8 1099.3L2616.6 1095.7L2608.0 1091.0L2600.4 1083.8L2596.9 1076.7L2592.4 1068.0L2588.0 1059.2L2583.1 1055.8L2582.8 1049.9L2587.3 1046.7L2586.2 1043.6L2583.8 1042.6L2585.5 1035.0L2587.3 1032.2L2591.4 1029.8L2592.4 1026.4L2595.9 1022.9L2596.6 1016.0L2595.9 1010.8L2594.5 1010.1Z" fill="#dadada" stroke="#dadada" stroke-width="0.8" stroke-linejoin="round"/><path d="M2626.6 1249.9L2620.1 1254.5L2616.6 1258.6L2623.5 1264.6L2632.1 1264.6L2638.4 1261.6L2633.9 1257.4L2628.7 1252.8Z" fill="#dadada" stroke="#dadada" stroke-width="0.8" stroke-linejoin="round"/><path d="M2611.4 586.0L2618.3 573.8L2628.7 558.9L2637.7 549.0L2632.1 538.6L2644.2 525.3L2652.5 516.0L2666.7 506.2L2675.0 502.4L2687.4 513.6L2694.0 502.4L2704.7 514.8L2708.8 502.4L2702.6 485.0L2725.4 473.5L2748.9 467.5L2772.0 479.3L2782.7 495.9L2772.0 511.1L2787.5 518.4L2796.2 523.0L2802.7 516.0L2822.1 523.0L2808.3 544.9L2801.3 562.7L2799.6 586.0L2794.4 602.2L2798.9 617.2L2794.4 633.9L2791.0 649.3L2782.4 661.3L2787.5 675.9L2784.1 687.6L2777.2 697.6L2766.8 706.3L2756.5 710.0L2746.1 724.3L2733.7 732.0L2725.4 737.0L2721.9 746.6L2716.7 760.2L2715.0 772.4L2711.6 775.8L2704.7 769.6L2696.0 765.3L2690.8 756.5L2685.0 743.4L2678.8 724.3L2680.5 710.9L2687.4 699.6L2675.3 691.7L2675.3 675.9L2670.1 653.0L2661.5 627.1L2649.4 617.2L2633.9 620.1L2623.5 612.8L2618.3 600.6Z" fill="#dadada" stroke="#dadada" stroke-width="0.8" stroke-linejoin="round"/><path d="M2778.9 732.8L2785.8 725.2L2794.4 727.8L2808.3 724.3L2813.4 728.6L2816.9 737.0L2811.7 742.6L2799.6 749.7L2792.7 748.9L2785.1 746.6L2787.5 741.0L2780.6 737.8L2787.5 734.5Z" fill="#dadada" stroke="#dadada" stroke-width="0.8" stroke-linejoin="round"/><path d="M2594.2 741.0L2606.3 741.8L2614.9 748.1L2621.8 755.7L2635.6 760.9L2639.1 756.5L2628.7 746.6L2639.1 753.5L2641.5 748.9L2637.3 737.0L2630.4 726.1L2642.5 735.3L2651.1 723.5L2647.7 715.5L2639.1 710.9L2630.4 698.6L2627.0 687.6L2616.6 678.1L2606.3 670.4L2597.6 661.3L2585.5 650.5L2582.1 654.2L2571.7 651.7L2566.5 648.0L2554.5 650.5L2552.7 667.1L2556.2 682.4L2561.4 689.6L2570.0 691.7L2580.4 693.7L2589.0 693.7L2595.9 698.6L2602.8 706.3L2609.7 708.2L2611.4 720.0L2608.0 732.8L2595.9 734.5Z" fill="#fdeee2" stroke="#fdeee2" stroke-width="0.8" stroke-linejoin="round"/><path d="M2464.7 698.6L2473.3 706.3L2488.8 704.4L2500.9 700.6L2513.0 694.7L2515.4 683.4L2502.7 678.1L2499.2 661.3L2492.3 655.4L2481.9 658.9L2469.9 655.4L2456.0 664.8L2452.6 674.9L2463.0 677.0L2473.3 685.5L2457.8 685.5L2461.2 695.7Z" fill="#fdeee2" stroke="#fdeee2" stroke-width="0.8" stroke-linejoin="round"/><path d="M2438.8 680.3L2448.1 675.9L2456.0 663.6L2463.0 653.0L2457.8 644.3L2444.0 640.4L2433.6 649.3L2430.1 664.8L2431.9 671.5Z" fill="#fdeee2" stroke="#fdeee2" stroke-width="0.8" stroke-linejoin="round"/><path d="M2459.5 631.2L2473.3 641.7L2487.1 636.5L2497.5 633.9L2499.2 622.9L2488.8 609.8L2476.8 620.1L2463.0 612.8L2457.8 622.9Z" fill="#fdeee2" stroke="#fdeee2" stroke-width="0.8" stroke-linejoin="round"/><path d="M2440.5 621.5L2450.9 620.1L2463.0 605.3L2461.2 597.4L2450.9 600.6L2438.8 614.3Z" fill="#fdeee2" stroke="#fdeee2" stroke-width="0.8" stroke-linejoin="round"/><path d="M2504.4 632.5L2518.2 633.9L2525.1 631.2L2525.1 612.8L2514.7 609.8L2504.4 617.2Z" fill="#fdeee2" stroke="#fdeee2" stroke-width="0.8" stroke-linejoin="round"/><path d="M2530.3 633.9L2535.5 639.1L2540.6 633.9L2538.9 625.7L2532.0 625.7Z" fill="#fdeee2" stroke="#fdeee2" stroke-width="0.8" stroke-linejoin="round"/><path d="M2530.3 627.1L2542.4 639.1L2559.6 640.4L2580.4 640.4L2588.3 633.9L2585.5 624.3L2576.9 622.9L2557.9 625.7L2554.5 615.7L2545.8 609.8L2532.0 606.8Z" fill="#fdeee2" stroke="#fdeee2" stroke-width="0.8" stroke-linejoin="round"/><path d="M2587.3 617.2L2594.9 605.3L2594.2 589.3L2604.5 579.1L2606.3 566.5L2618.3 556.9L2632.1 536.4L2640.8 523.0L2651.1 501.1L2642.5 487.8L2621.8 479.3L2597.6 482.2L2580.4 493.2L2563.1 508.7L2549.3 520.7L2559.6 540.7L2566.5 553.0L2570.0 572.0L2559.6 586.0L2556.2 600.6L2563.1 612.8L2576.9 614.3Z" fill="#fdeee2" stroke="#fdeee2" stroke-width="0.8" stroke-linejoin="round"/><path d="M2551.0 586.0L2561.4 575.6L2563.1 556.9L2551.0 540.7L2540.6 525.3L2532.0 542.8L2535.5 564.6L2542.4 579.1Z" fill="#fdeee2" stroke="#fdeee2" stroke-width="0.8" stroke-linejoin="round"/><path d="M2502.7 586.0L2518.2 592.6L2528.6 586.0L2521.7 572.0L2507.8 566.5L2499.2 575.6Z" fill="#fdeee2" stroke="#fdeee2" stroke-width="0.8" stroke-linejoin="round"/><path d="M2533.7 649.3L2545.8 645.5L2552.7 649.3L2552.0 661.3L2544.1 670.4L2535.5 670.4L2533.7 658.9Z" fill="#fdeee2" stroke="#fdeee2" stroke-width="0.8" stroke-linejoin="round"/><path d="M2511.3 660.1L2518.2 646.8L2526.8 649.3L2530.3 661.3L2526.8 675.9L2519.9 678.1L2509.6 670.4Z" fill="#fdeee2" stroke="#fdeee2" stroke-width="0.8" stroke-linejoin="round"/><path d="M2519.9 701.5L2528.6 693.7L2533.7 699.6L2530.3 706.3L2521.7 705.3Z" fill="#fdeee2" stroke="#fdeee2" stroke-width="0.8" stroke-linejoin="round"/><path d="M2564.8 731.2L2571.7 728.6L2576.9 737.0L2583.8 742.6L2586.6 746.6L2580.4 748.1L2573.4 752.7L2568.3 751.2L2562.4 747.3L2566.5 741.0L2563.1 734.5Z" fill="#fdeee2" stroke="#fdeee2" stroke-width="0.8" stroke-linejoin="round"/><path d="M2658.7 847.6L2661.5 840.4L2665.6 831.3L2670.8 826.3L2671.2 832.3L2668.4 836.1L2675.3 837.2L2678.8 842.5L2681.5 848.1L2679.5 852.2L2675.3 850.7L2671.9 851.2L2670.1 847.6Z" fill="#fdeee2" stroke="#fdeee2" stroke-width="0.8" stroke-linejoin="round"/><path d="M2420.5 830.7L2430.1 833.4L2437.1 841.4L2437.1 844.0L2431.9 841.9L2426.7 837.7L2421.5 834.0Z" fill="#fdeee2" stroke="#fdeee2" stroke-width="0.8" stroke-linejoin="round"/><path d="M2404.3 811.4L2408.7 812.6L2410.5 822.9L2406.0 818.4Z" fill="#fdeee2" stroke="#fdeee2" stroke-width="0.8" stroke-linejoin="round"/><path d="M2330.0 791.1L2336.9 786.6L2338.0 792.4L2331.0 796.2Z" fill="#f3af97" stroke="#f3af97" stroke-width="0.8" stroke-linejoin="round"/><path d="M2324.8 963.8L2328.3 965.2L2326.6 968.2L2324.8 966.3Z" fill="#f3af97" stroke="#f3af97" stroke-width="0.8" stroke-linejoin="round"/><path d="M2270.6 748.9L2279.9 750.4L2280.6 752.7L2271.3 751.2Z" fill="#f3af97" stroke="#f3af97" stroke-width="0.8" stroke-linejoin="round"/><path d="M2285.8 773.1L2291.0 772.4L2291.0 775.8L2286.2 775.8Z" fill="#f3af97" stroke="#f3af97" stroke-width="0.8" stroke-linejoin="round"/><path d="M2281.7 815.5L2288.6 812.6L2289.3 814.9L2282.4 817.8Z" fill="#f3af97" stroke="#f3af97" stroke-width="0.8" stroke-linejoin="round"/><path d="M2261.0 822.4L2267.9 821.8L2267.9 824.1L2261.0 824.1Z" fill="#f3af97" stroke="#f3af97" stroke-width="0.8" stroke-linejoin="round"/><path d="M2242.0 702.5L2250.6 708.2L2259.2 715.5L2269.6 720.0L2277.2 727.8L2269.6 742.6L2265.4 742.6L2257.5 737.8L2255.8 732.8L2247.1 728.6L2242.0 735.3Z" fill="#dadada" stroke="#dadada" stroke-width="0.8" stroke-linejoin="round"/><path d="M2242.0 675.9L2248.9 675.9L2250.6 680.3L2242.0 682.4Z" fill="#dadada" stroke="#dadada" stroke-width="0.8" stroke-linejoin="round"/><path d="M2831.7 869.8L2835.9 866.9L2846.2 867.9L2857.3 868.3L2859.4 863.1L2859.4 855.7L2854.9 849.2L2847.3 845.6L2848.0 842.5L2858.0 841.9L2857.3 836.7L2864.2 837.2L2869.0 830.7L2875.6 827.4L2879.0 821.2L2880.8 816.7L2887.7 815.5L2893.9 813.2L2892.9 803.6L2891.8 794.3L2899.8 789.8L2899.1 797.4L2898.0 806.6L2901.5 812.6L2906.7 810.2L2912.5 812.6L2920.5 809.6L2927.4 807.8L2931.9 810.2L2936.0 805.4L2936.0 794.3L2941.2 789.8L2947.4 793.0L2947.4 785.9L2944.6 779.9L2953.3 777.2L2960.2 777.2L2967.8 775.1L2961.9 771.0L2953.3 771.7L2942.9 775.1L2937.0 767.4L2937.7 752.7L2948.1 738.6L2950.9 732.8L2946.4 730.3L2939.5 732.8L2937.0 742.6L2929.1 751.2L2923.2 760.2L2922.9 769.6L2928.4 775.8L2922.2 783.9L2920.5 794.3L2918.1 799.9L2912.9 803.6L2908.4 804.2L2907.4 799.3L2904.2 789.2L2902.2 781.3L2899.8 777.9L2896.3 781.9L2891.1 787.2L2885.9 787.2L2882.5 781.3L2880.8 767.4L2882.5 758.7L2892.9 748.9L2900.8 741.0L2906.7 730.3L2913.6 715.5L2918.7 706.3L2927.4 695.7L2937.7 689.6L2952.2 680.3L2961.9 681.3L2970.5 688.6L2969.9 693.7L2977.4 697.6L2987.8 700.6L3003.3 712.8L3005.8 721.7L3001.6 726.9L2986.1 724.3L2977.4 721.7L2983.7 741.0L2991.3 743.4L2994.7 738.6L3003.3 740.2L3001.6 730.3L3013.7 726.9L3016.1 710.9L3013.0 705.3L3022.3 710.9L3024.1 720.9L3029.2 714.6L3046.5 710.9L3051.7 708.2L3067.2 707.2L3072.4 701.5L3071.4 693.7L3086.2 698.6L3094.9 703.4L3100.0 708.2L3094.9 696.6L3094.2 691.7L3095.9 675.9L3101.8 661.3L3110.4 656.6L3114.9 662.5L3113.8 681.3L3117.3 703.4L3112.1 724.3L3120.7 712.8L3120.7 701.5L3117.3 675.9L3122.5 664.8L3132.8 667.1L3141.5 653.0L3144.9 670.4L3150.1 681.3L3151.8 653.0L3163.9 646.8L3174.3 627.1L3191.5 620.1L3208.8 612.8L3223.6 594.2L3233.0 606.8L3250.2 612.8L3255.4 627.1L3241.6 646.8L3252.0 650.5L3272.7 653.0L3289.9 653.0L3302.0 653.0L3310.7 681.3L3322.7 675.9L3336.6 675.9L3346.9 664.8L3367.6 667.1L3383.2 675.9L3390.1 682.4L3405.6 681.3L3416.0 691.7L3424.6 695.7L3441.9 693.7L3452.2 701.5L3452.2 690.6L3471.2 693.7L3485.0 701.5L3485.0 737.0L3479.9 740.2L3476.4 739.4L3483.3 756.5L3467.8 761.7L3457.4 768.9L3452.2 774.4L3436.7 775.8L3428.1 784.6L3424.6 789.8L3427.0 800.5L3422.9 807.8L3416.0 817.2L3410.8 819.5L3404.6 829.6L3402.2 818.4L3400.8 800.5L3404.9 789.2L3415.3 775.8L3422.2 771.0L3428.1 760.2L3416.0 762.4L3403.9 763.8L3397.0 777.9L3384.9 777.9L3376.3 779.2L3357.3 779.2L3346.9 791.1L3338.3 806.6L3331.4 808.4L3338.3 814.3L3348.6 818.4L3351.4 822.9L3348.6 835.0L3348.0 845.6L3341.7 853.2L3333.1 863.1L3322.7 871.2L3318.6 869.3L3314.8 873.5L3311.4 879.5L3304.1 885.0L3310.0 895.1L3310.3 903.7L3303.8 907.5L3299.6 907.5L3300.3 899.5L3301.3 894.3L3295.1 893.0L3296.2 886.3L3292.7 884.1L3284.8 880.9L3281.3 880.4L3276.1 885.0L3270.3 888.5L3273.7 893.8L3280.6 893.8L3286.5 896.0L3281.3 899.5L3276.1 904.6L3279.6 912.1L3284.1 919.1L3284.1 923.1L3284.8 927.1L3283.0 933.0L3277.9 940.0L3274.4 945.0L3269.2 950.3L3264.0 953.7L3257.8 956.0L3252.0 958.2L3245.1 960.1L3244.4 963.4L3242.3 959.0L3237.5 958.6L3232.3 961.5L3228.8 968.2L3232.3 974.3L3237.5 979.0L3240.9 987.9L3240.6 995.0L3233.0 998.9L3231.2 1002.0L3226.1 1004.8L3225.4 999.6L3220.9 998.2L3217.4 993.3L3211.9 988.7L3208.8 988.7L3208.1 995.0L3206.4 1002.7L3209.8 1006.6L3210.5 1010.1L3215.0 1011.8L3219.2 1016.0L3220.9 1021.2L3223.3 1030.2L3220.5 1029.8L3213.3 1025.0L3209.8 1016.0L3207.8 1011.5L3203.6 1006.6L3203.6 1000.3L3204.3 993.3L3201.2 984.4L3200.5 977.2L3195.0 977.2L3192.6 979.7L3189.1 979.0L3189.8 971.8L3186.4 965.2L3182.2 961.5L3180.5 955.6L3176.0 954.9L3170.8 957.8L3163.9 959.0L3163.2 962.7L3157.0 966.3L3147.7 976.1L3140.8 980.8L3140.4 989.0L3139.0 999.2L3136.3 1002.7L3133.5 1004.5L3131.1 1006.9L3127.0 1001.0L3122.5 991.5L3119.0 982.6L3115.6 971.8L3114.9 968.2L3114.9 960.8L3112.8 957.8L3108.0 961.5L3101.8 956.0L3105.2 954.1L3100.0 951.5L3095.5 946.9L3086.2 945.0L3075.9 945.4L3063.8 943.5L3060.3 938.1L3051.7 939.7L3044.8 935.8L3038.9 929.5L3036.2 925.5L3032.0 925.1L3029.2 928.3L3031.7 934.2L3036.2 939.3L3036.8 943.9L3040.3 941.6L3041.7 945.8L3041.3 948.5L3050.0 948.8L3056.9 942.0L3058.6 940.8L3058.6 947.7L3065.5 951.1L3070.0 955.2L3065.5 962.7L3062.7 968.2L3053.4 975.4L3043.1 980.8L3031.0 986.2L3018.9 990.4L3013.7 990.8L3011.3 983.3L3010.3 977.2L3005.1 968.9L2998.9 959.0L2994.7 949.6L2989.5 942.0L2984.4 934.2L2984.0 928.3L2981.6 935.4L2976.1 926.7L2975.0 921.5L2981.6 921.1L2984.0 915.0L2986.1 910.0L2987.5 903.7L2988.5 899.0L2982.6 898.6L2975.7 901.2L2968.8 900.3L2963.6 899.0L2957.8 898.6L2954.3 891.6L2954.0 886.3L2954.0 884.1L2958.5 882.7L2963.6 881.8L2964.0 879.1L2970.5 879.1L2977.4 874.9L2985.0 874.9L2989.5 878.1L2996.4 880.0L3006.8 877.2L3006.8 871.6L2999.9 867.4L2994.0 862.1L2990.6 859.2L2994.7 855.7L2999.2 850.2L2993.0 851.2L2984.4 854.7L2986.1 859.2L2980.9 863.5L2979.2 862.6L2975.7 858.7L2979.9 855.2L2974.0 853.2L2969.9 853.2L2966.1 859.6L2962.6 865.5L2960.2 870.2L2959.1 872.6L2960.9 877.2L2963.6 878.6L2960.2 879.5L2956.7 881.3L2954.0 882.3L2953.3 880.4L2948.1 880.0L2944.6 882.7L2942.2 882.3L2941.9 887.6L2946.4 893.0L2944.6 893.4L2943.6 899.5L2941.2 899.5L2938.4 898.2L2936.7 892.1L2933.3 886.3L2930.8 881.8L2930.8 875.8L2927.4 872.6L2920.5 867.9L2916.0 864.0L2913.6 859.6L2910.8 857.7L2906.0 859.2L2906.0 864.0L2910.5 867.9L2912.9 873.5L2918.7 875.4L2927.4 883.6L2922.2 882.3L2920.8 885.9L2922.5 889.0L2917.7 893.4L2918.7 889.0L2917.0 883.6L2912.9 880.9L2906.0 876.3L2899.8 870.7L2898.7 865.9L2893.9 863.5L2889.4 866.4L2880.8 868.8L2875.6 868.8L2874.2 873.0L2874.5 875.4L2870.8 878.1L2865.2 881.8L2862.5 886.8L2864.2 889.9L2861.1 894.7L2855.9 898.6L2848.3 898.6L2844.2 901.6L2841.4 898.2L2837.9 896.4L2832.8 897.3L2833.1 890.8L2830.7 889.4L2833.1 881.8L2833.1 874.9Z" fill="#dadada" stroke="#dadada" stroke-width="0.8" stroke-linejoin="round"/><path d="M2843.1 902.5L2856.6 905.4L2863.5 902.5L2873.9 898.2L2887.7 897.3L2898.0 896.0L2901.5 897.3L2898.7 903.7L2898.0 910.0L2901.5 913.3L2908.4 914.6L2916.3 917.0L2917.0 920.3L2925.7 924.3L2932.6 922.3L2932.6 916.2L2939.5 914.6L2949.8 919.5L2963.6 922.7L2970.5 920.3L2975.0 921.5L2976.1 926.7L2979.2 935.0L2986.1 949.6L2991.3 960.8L2992.3 968.9L2998.2 979.0L3005.1 986.2L3012.7 991.5L3013.0 995.0L3018.9 998.5L3029.2 996.1L3040.3 993.6L3038.9 1000.3L3032.7 1012.5L3027.5 1021.2L3018.9 1028.8L3010.3 1038.5L3004.4 1043.6L2999.9 1051.2L2998.2 1057.5L2999.9 1064.5L3003.3 1071.5L3004.0 1085.6L2999.9 1092.8L2989.5 1101.1L2984.4 1107.3L2986.1 1118.5L2977.4 1126.1L2976.8 1133.8L2972.3 1141.7L2965.4 1150.9L2958.5 1157.9L2951.6 1160.0L2941.2 1160.8L2932.6 1163.3L2927.0 1160.8L2926.3 1153.8L2923.9 1143.7L2918.7 1135.8L2915.3 1126.1L2913.6 1114.8L2908.4 1105.5L2904.2 1096.4L2904.9 1087.4L2910.1 1078.5L2910.1 1069.7L2906.7 1057.5L2904.9 1052.3L2898.0 1043.6L2894.6 1037.8L2896.3 1031.5L2897.3 1024.6L2894.6 1020.5L2889.4 1019.8L2884.2 1020.1L2879.0 1013.5L2872.1 1013.2L2867.0 1014.6L2856.6 1018.4L2848.0 1017.0L2837.6 1019.8L2830.7 1014.9L2823.8 1010.8L2817.9 1004.5L2813.4 998.5L2805.8 992.2L2803.1 983.7L2806.5 977.2L2807.6 968.2L2804.8 960.8L2808.3 951.5L2813.4 942.0L2818.6 935.0L2825.5 931.1L2829.7 926.3L2830.0 920.3L2835.9 912.5L2841.1 907.9Z" fill="#dadada" stroke="#dadada" stroke-width="0.8" stroke-linejoin="round"/><path d="M3033.7 1076.7L3037.2 1089.2L3034.4 1096.4L3031.0 1109.2L3025.8 1124.2L3018.9 1126.1L3014.4 1118.5L3013.7 1111.0L3016.5 1103.7L3016.1 1094.6L3022.3 1090.3L3029.2 1083.1Z" fill="#dadada" stroke="#dadada" stroke-width="0.8" stroke-linejoin="round"/><path d="M2843.8 834.5L2851.4 833.4L2860.0 831.3L2868.3 828.5L2866.3 826.9L2869.4 820.7L2864.5 818.4L2863.5 814.9L2859.4 809.0L2858.0 803.6L2854.9 800.5L2856.6 791.1L2851.4 789.8L2852.8 783.9L2846.2 783.9L2843.5 791.1L2843.8 798.7L2846.6 803.6L2846.2 807.8L2851.4 807.2L2852.8 813.2L2853.1 816.1L2848.0 816.7L2848.7 820.7L2845.5 825.2L2852.5 827.4L2853.1 828.5L2848.7 829.1Z" fill="#f7cdb6" stroke="#f7cdb6" stroke-width="0.8" stroke-linejoin="round"/><path d="M2829.0 826.3L2834.1 825.7L2841.7 822.9L2842.4 816.7L2843.5 809.0L2842.1 805.4L2837.6 804.8L2834.1 809.0L2829.0 811.4L2829.7 816.7L2830.7 820.7L2827.9 824.1Z" fill="#fce9da" stroke="#fce9da" stroke-width="0.8" stroke-linejoin="round"/><path d="M2901.5 560.8L2918.7 553.0L2925.7 562.7L2937.7 575.6L2927.4 597.4L2922.2 611.3L2913.6 597.4L2910.1 586.0L2901.5 572.0Z" fill="#dadada" stroke="#dadada" stroke-width="0.8" stroke-linejoin="round"/><path d="M2927.4 549.0L2941.2 542.8L2956.7 551.0L2948.1 564.6L2934.3 560.8Z" fill="#dadada" stroke="#dadada" stroke-width="0.8" stroke-linejoin="round"/><path d="M2937.7 586.0L2944.6 591.0L2941.2 600.6L2936.0 595.8Z" fill="#dadada" stroke="#dadada" stroke-width="0.8" stroke-linejoin="round"/><path d="M3022.3 540.7L3036.2 534.3L3039.6 542.8L3027.5 549.0Z" fill="#dadada" stroke="#dadada" stroke-width="0.8" stroke-linejoin="round"/><path d="M3050.0 534.3L3063.8 525.3L3077.6 532.1L3070.7 544.9L3056.9 547.0Z" fill="#dadada" stroke="#dadada" stroke-width="0.8" stroke-linejoin="round"/><path d="M3060.3 685.5L3046.5 679.2L3041.3 672.7L3044.8 661.3L3050.0 649.3L3055.1 633.9L3065.5 621.5L3081.0 612.8L3091.4 605.3L3101.8 605.3L3100.0 615.7L3084.5 627.1L3072.4 640.4L3065.5 653.0L3058.6 667.1L3062.0 679.2Z" fill="#dadada" stroke="#dadada" stroke-width="0.8" stroke-linejoin="round"/><path d="M3193.3 532.1L3200.2 536.4L3198.4 549.0L3186.4 547.0Z" fill="#dadada" stroke="#dadada" stroke-width="0.8" stroke-linejoin="round"/><path d="M3189.8 555.0L3205.3 555.0L3210.5 572.0L3201.9 575.6L3189.8 568.3Z" fill="#dadada" stroke="#dadada" stroke-width="0.8" stroke-linejoin="round"/><path d="M3212.3 566.5L3224.3 575.6L3226.1 586.0L3212.3 589.3L3208.1 579.1Z" fill="#dadada" stroke="#dadada" stroke-width="0.8" stroke-linejoin="round"/><path d="M3338.3 629.8L3343.5 618.6L3353.8 620.1L3360.7 629.8L3355.6 636.5L3343.5 637.8Z" fill="#dadada" stroke="#dadada" stroke-width="0.8" stroke-linejoin="round"/><path d="M3369.4 629.8L3378.0 628.4L3383.2 633.9L3376.3 636.5L3369.4 633.9Z" fill="#dadada" stroke="#dadada" stroke-width="0.8" stroke-linejoin="round"/><path d="M3346.9 651.7L3353.8 648.0L3359.0 654.2L3352.1 656.6Z" fill="#dadada" stroke="#dadada" stroke-width="0.8" stroke-linejoin="round"/><path d="M3479.9 679.2L3485.0 675.9L3485.0 682.4L3481.6 682.4Z" fill="#dadada" stroke="#dadada" stroke-width="0.8" stroke-linejoin="round"/><path d="M3353.8 810.8L3358.0 818.4L3358.3 829.6L3362.5 840.4L3357.3 839.3L3356.6 848.1L3359.0 854.2L3353.8 855.7L3353.8 845.6L3354.5 835.0L3353.1 824.1L3353.1 815.5Z" fill="#dadada" stroke="#dadada" stroke-width="0.8" stroke-linejoin="round"/><path d="M3346.9 877.2L3346.2 872.1L3348.0 868.8L3351.4 869.3L3352.8 858.7L3357.3 863.1L3365.2 864.0L3365.9 868.8L3358.3 874.9L3350.4 872.1L3348.6 874.9Z" fill="#dadada" stroke="#dadada" stroke-width="0.8" stroke-linejoin="round"/><path d="M3351.4 877.7L3353.8 886.3L3350.4 893.0L3350.0 901.6L3346.9 905.8L3342.8 907.1L3336.6 907.5L3332.4 912.1L3329.7 907.5L3322.7 908.8L3315.8 910.0L3316.9 907.5L3322.1 903.7L3331.4 903.3L3335.9 896.0L3337.3 898.2L3342.8 893.8L3346.2 888.5L3346.9 881.8L3348.0 878.6Z" fill="#dadada" stroke="#dadada" stroke-width="0.8" stroke-linejoin="round"/><path d="M3315.5 910.4L3318.6 912.9L3317.6 920.3L3314.8 922.3L3313.1 917.5L3311.4 914.2L3313.4 911.7Z" fill="#dadada" stroke="#dadada" stroke-width="0.8" stroke-linejoin="round"/><path d="M3321.0 910.0L3328.3 909.2L3327.2 912.1L3322.7 915.0L3320.3 912.5Z" fill="#dadada" stroke="#dadada" stroke-width="0.8" stroke-linejoin="round"/><path d="M3283.0 944.7L3284.8 947.7L3281.0 957.1L3278.2 953.4L3280.6 947.3Z" fill="#dadada" stroke="#dadada" stroke-width="0.8" stroke-linejoin="round"/><path d="M3238.8 966.3L3244.4 964.1L3246.8 966.3L3243.3 970.7L3238.8 969.6Z" fill="#dadada" stroke="#dadada" stroke-width="0.8" stroke-linejoin="round"/><path d="M3139.0 1001.3L3143.9 1005.5L3146.0 1010.8L3141.5 1014.6L3138.7 1010.8L3139.0 1005.5Z" fill="#dadada" stroke="#dadada" stroke-width="0.8" stroke-linejoin="round"/><path d="M3279.6 970.0L3285.5 970.0L3284.8 977.2L3283.4 982.6L3288.2 986.2L3291.7 989.7L3289.9 990.4L3284.8 986.9L3280.6 986.9L3277.9 982.6L3278.9 977.2Z" fill="#dadada" stroke="#dadada" stroke-width="0.8" stroke-linejoin="round"/><path d="M3284.8 1010.8L3289.9 1005.5L3296.9 1001.0L3300.3 1007.3L3299.3 1013.2L3296.9 1015.6L3291.7 1012.5L3289.9 1009.0L3285.5 1011.1Z" fill="#dadada" stroke="#dadada" stroke-width="0.8" stroke-linejoin="round"/><path d="M3286.5 994.0L3296.2 991.5L3296.9 998.5L3289.9 1002.0L3284.8 998.5Z" fill="#dadada" stroke="#dadada" stroke-width="0.8" stroke-linejoin="round"/><path d="M3268.2 1005.9L3276.1 998.5L3276.8 995.7L3273.7 1000.3Z" fill="#dadada" stroke="#dadada" stroke-width="0.8" stroke-linejoin="round"/><path d="M3239.9 1029.8L3243.3 1029.1L3247.8 1026.4L3253.7 1023.9L3258.9 1018.8L3264.0 1013.5L3267.5 1010.8L3270.3 1014.2L3274.4 1017.0L3271.0 1020.1L3270.3 1025.3L3273.7 1031.5L3269.2 1035.0L3268.2 1039.5L3265.1 1044.7L3264.0 1048.8L3258.9 1048.8L3253.7 1046.1L3248.5 1046.4L3244.0 1043.6L3243.3 1039.5L3239.9 1035.7Z" fill="#dadada" stroke="#dadada" stroke-width="0.8" stroke-linejoin="round"/><path d="M3192.6 1015.6L3200.2 1017.0L3204.3 1021.9L3210.5 1027.4L3215.7 1031.5L3220.9 1035.0L3224.3 1041.2L3229.5 1045.4L3228.8 1055.1L3224.3 1054.7L3219.2 1050.6L3214.0 1044.7L3209.8 1037.8L3205.3 1032.2L3200.2 1026.4L3195.0 1021.2Z" fill="#dadada" stroke="#dadada" stroke-width="0.8" stroke-linejoin="round"/><path d="M3226.8 1058.2L3231.2 1055.8L3238.2 1057.8L3246.1 1057.1L3252.7 1058.9L3258.9 1062.0L3258.5 1065.2L3250.2 1064.1L3239.9 1062.0L3231.2 1060.6Z" fill="#dadada" stroke="#dadada" stroke-width="0.8" stroke-linejoin="round"/><path d="M3260.6 1063.4L3269.2 1063.4L3274.4 1064.1L3281.3 1064.1L3288.2 1063.8L3287.5 1065.5L3277.9 1065.9L3267.5 1066.2L3261.3 1065.5Z" fill="#dadada" stroke="#dadada" stroke-width="0.8" stroke-linejoin="round"/><path d="M3289.9 1070.8L3295.1 1066.2L3302.7 1064.1L3298.6 1068.0L3291.7 1070.8Z" fill="#dadada" stroke="#dadada" stroke-width="0.8" stroke-linejoin="round"/><path d="M3274.4 1047.1L3273.7 1044.0L3277.2 1035.0L3278.6 1031.9L3281.3 1030.5L3288.2 1031.5L3295.1 1029.1L3295.8 1031.5L3289.9 1034.0L3281.3 1033.3L3278.6 1037.8L3282.0 1038.5L3289.3 1037.4L3289.6 1039.1L3284.1 1041.2L3284.8 1045.4L3288.2 1049.5L3286.5 1053.3L3283.4 1050.6L3281.0 1045.4L3279.2 1046.1L3279.6 1054.0L3276.1 1054.4Z" fill="#dadada" stroke="#dadada" stroke-width="0.8" stroke-linejoin="round"/><path d="M3303.8 1028.1L3307.2 1029.8L3305.5 1035.0L3307.2 1037.8L3304.4 1036.0L3303.8 1031.5Z" fill="#dadada" stroke="#dadada" stroke-width="0.8" stroke-linejoin="round"/><path d="M3305.5 1045.4L3314.1 1045.4L3315.2 1047.4L3306.2 1047.1Z" fill="#dadada" stroke="#dadada" stroke-width="0.8" stroke-linejoin="round"/><path d="M3315.8 1037.8L3321.0 1036.4L3326.2 1037.8L3329.7 1046.4L3338.3 1040.5L3350.4 1044.0L3362.5 1048.5L3367.6 1054.0L3373.9 1055.8L3371.1 1058.5L3376.3 1066.2L3383.2 1071.1L3378.0 1070.8L3371.1 1068.0L3364.2 1062.0L3359.0 1064.5L3355.6 1066.9L3350.4 1066.6L3343.5 1063.1L3340.0 1064.1L3342.8 1058.5L3340.0 1054.0L3333.1 1050.6L3324.5 1048.1L3322.1 1048.8L3324.5 1043.6L3319.3 1044.7L3315.8 1040.2Z" fill="#dadada" stroke="#dadada" stroke-width="0.8" stroke-linejoin="round"/><path d="M3376.3 1054.0L3383.2 1054.0L3389.0 1049.5L3388.4 1052.3L3383.2 1056.5L3377.3 1055.8Z" fill="#dadada" stroke="#dadada" stroke-width="0.8" stroke-linejoin="round"/><path d="M3355.6 1072.2L3360.0 1084.9L3365.2 1087.4L3367.6 1100.0L3376.3 1106.2L3384.2 1116.6L3391.8 1126.1L3393.5 1137.7L3391.1 1151.7L3385.6 1160.0L3381.4 1173.6L3374.5 1176.6L3368.7 1181.9L3362.5 1177.9L3350.4 1177.9L3345.9 1170.5L3340.0 1167.1L3340.0 1155.8L3333.1 1163.3L3329.7 1157.9L3326.2 1154.6L3315.8 1149.7L3305.5 1152.5L3295.1 1155.8L3289.9 1160.0L3277.9 1160.0L3270.3 1164.6L3260.6 1161.2L3263.0 1151.7L3259.9 1139.7L3255.4 1128.0L3256.1 1115.1L3265.8 1108.1L3276.1 1105.5L3284.8 1098.2L3289.9 1094.6L3296.9 1085.6L3304.8 1084.5L3310.7 1087.4L3314.1 1078.5L3321.0 1075.0L3331.4 1077.1L3335.9 1077.4L3332.1 1086.7L3338.3 1091.0L3345.2 1096.4L3349.7 1096.4L3352.1 1087.4L3352.8 1078.5Z" fill="#dadada" stroke="#dadada" stroke-width="0.8" stroke-linejoin="round"/><path d="M3363.1 1189.1L3369.4 1190.9L3375.6 1190.0L3374.5 1197.4L3371.1 1202.1L3367.6 1202.1L3364.9 1196.5Z" fill="#dadada" stroke="#dadada" stroke-width="0.8" stroke-linejoin="round"/><path d="M3459.8 1161.6L3466.0 1168.4L3469.5 1171.8L3471.2 1175.3L3478.1 1175.3L3479.9 1175.7L3477.4 1182.4L3474.7 1183.7L3473.0 1189.6L3468.8 1193.2L3467.1 1191.9L3468.5 1186.8L3464.3 1183.7L3467.1 1180.6L3466.7 1174.0L3463.6 1168.4Z" fill="#dadada" stroke="#dadada" stroke-width="0.8" stroke-linejoin="round"/><path d="M3459.8 1188.2L3465.4 1192.8L3460.9 1199.8L3460.2 1203.6L3454.7 1206.5L3453.3 1213.8L3447.1 1217.3L3444.6 1217.3L3438.4 1214.3L3442.9 1206.9L3450.5 1200.7L3455.7 1195.1L3458.1 1190.5Z" fill="#dadada" stroke="#dadada" stroke-width="0.8" stroke-linejoin="round"/><path d="M2906.3 893.0L2917.4 892.1L2916.0 898.6L2906.7 894.7Z" fill="#dadada" stroke="#dadada" stroke-width="0.8" stroke-linejoin="round"/><path d="M2891.8 880.0L2897.0 878.6L2897.0 887.6L2892.9 889.0Z" fill="#dadada" stroke="#dadada" stroke-width="0.8" stroke-linejoin="round"/><path d="M2893.2 873.0L2896.3 870.2L2896.3 877.2L2893.9 877.2Z" fill="#dadada" stroke="#dadada" stroke-width="0.8" stroke-linejoin="round"/><path d="M2944.6 903.3L2954.3 904.6L2954.0 905.8L2945.0 905.0Z" fill="#dadada" stroke="#dadada" stroke-width="0.8" stroke-linejoin="round"/><path d="M2975.0 905.4L2982.6 902.9L2980.9 906.3L2975.7 907.5Z" fill="#dadada" stroke="#dadada" stroke-width="0.8" stroke-linejoin="round"/><path d="M3429.8 1106.2L3440.2 1113.6L3438.4 1114.4L3429.1 1107.7Z" fill="#dadada" stroke="#dadada" stroke-width="0.8" stroke-linejoin="round"/><path d="M3475.7 1096.0L3480.2 1096.0L3480.2 1098.9L3475.7 1098.9Z" fill="#dadada" stroke="#dadada" stroke-width="0.8" stroke-linejoin="round"/><path d="M2831.7 869.8L2835.9 866.9L2846.2 867.9L2857.3 868.3L2859.4 863.1L2859.4 855.7L2854.9 849.2L2847.3 845.6L2848.0 842.5L2858.0 841.9L2857.3 836.7L2864.2 837.2L2869.0 830.7L2875.6 827.4L2879.0 821.2L2880.8 816.7L2887.7 815.5L2893.9 813.2L2892.9 803.6L2891.8 794.3L2899.8 789.8L2899.1 797.4L2898.0 806.6L2901.5 812.6L2906.7 810.2L2912.5 812.6L2920.5 809.6L2927.4 807.8L2931.9 810.2L2942.2 810.2L2944.6 813.2L2946.0 820.1L2945.0 826.9L2946.7 830.7L2941.5 837.7L2940.2 839.8L2928.8 837.7L2922.2 842.5L2922.5 845.6L2919.1 851.2L2910.8 853.2L2910.8 857.7L2906.0 859.2L2906.0 864.0L2910.5 867.9L2912.9 873.5L2918.7 875.4L2927.4 883.6L2922.2 882.3L2920.8 885.9L2922.5 889.0L2917.7 893.4L2918.7 889.0L2917.0 883.6L2912.9 880.9L2906.0 876.3L2899.8 870.7L2898.7 865.9L2893.9 863.5L2889.4 866.4L2880.8 868.8L2875.6 868.8L2874.2 873.0L2874.5 875.4L2870.8 878.1L2865.2 881.8L2862.5 886.8L2864.2 889.9L2861.1 894.7L2855.9 898.6L2848.3 898.6L2844.2 901.6L2841.4 898.2L2837.9 896.4L2832.8 897.3L2833.1 890.8L2830.7 889.4L2833.1 881.8L2833.1 874.9Z" fill="#f8d0ba" stroke="#f8d0ba" stroke-width="0.8" stroke-linejoin="round"/><path d="M2899.8 777.9L2896.3 781.9L2891.1 787.2L2885.9 787.2L2882.5 781.3L2880.8 767.4L2882.5 758.7L2892.9 748.9L2900.8 741.0L2906.7 730.3L2913.6 715.5L2918.7 706.3L2927.4 695.7L2937.7 689.6L2952.2 680.3L2961.9 681.3L2970.5 688.6L2969.9 693.7L2963.3 700.6L2961.9 709.1L2967.1 713.7L2963.6 720.9L2967.1 731.2L2966.1 738.6L2968.8 743.4L2972.3 753.5L2963.6 765.3L2959.5 771.0L2953.3 771.7L2942.9 775.1L2937.0 767.4L2937.7 752.7L2948.1 738.6L2950.9 732.8L2946.4 730.3L2939.5 732.8L2937.0 742.6L2929.1 751.2L2923.2 760.2L2922.9 769.6L2928.4 775.8L2922.2 783.9L2920.5 794.3L2918.1 799.9L2912.9 803.6L2908.4 804.2L2907.4 799.3L2904.2 789.2L2902.2 781.3Z" fill="#fef8ec" stroke="#fef8ec" stroke-width="0.8" stroke-linejoin="round"/><path d="M2685.7 1019.8L2690.8 1028.8L2690.8 1035.0L2696.0 1037.4L2701.2 1037.4L2709.8 1042.9L2718.5 1044.7L2725.4 1045.0L2732.3 1048.8L2737.5 1052.6L2742.0 1054.0L2743.3 1061.0L2742.0 1068.0L2735.7 1075.0L2730.6 1080.3L2728.8 1089.2L2727.1 1098.2L2723.7 1107.3L2721.9 1112.9L2715.0 1116.6L2708.1 1119.7L2701.2 1123.1L2696.0 1128.0L2695.3 1135.8L2690.8 1142.9L2683.9 1151.7L2679.1 1158.7L2678.8 1153.8L2671.9 1146.9L2664.6 1144.5L2670.8 1137.0L2677.7 1132.3L2675.0 1126.5L2676.0 1120.4L2671.9 1120.0L2663.9 1113.3L2663.2 1106.2L2665.0 1098.2L2662.2 1095.7L2655.6 1092.1L2656.3 1083.1L2649.4 1081.0L2640.8 1078.2L2638.0 1073.2L2638.0 1069.0L2632.1 1070.4L2623.5 1073.2L2620.1 1073.2L2620.1 1068.0L2613.2 1068.0L2608.7 1060.3L2611.4 1052.3L2621.8 1049.9L2623.5 1038.5L2621.8 1033.3L2622.5 1029.1L2632.1 1030.9L2632.8 1030.9L2639.1 1031.5L2644.2 1027.4L2641.8 1020.8L2649.4 1020.8L2653.9 1017.0L2657.0 1019.4L2656.3 1026.4L2659.8 1030.5L2666.7 1028.1L2670.5 1028.1L2675.3 1027.1L2680.8 1027.4L2685.0 1021.2Z" fill="#f6c3ab" stroke="#f6c3ab" stroke-width="0.8" stroke-linejoin="round"/><path d="M2617.3 991.8L2616.6 996.8L2621.8 994.7L2622.5 992.6L2627.0 997.5L2635.6 998.2L2640.8 999.6L2647.7 997.8L2650.1 1000.3L2653.6 1005.2L2657.0 1006.2L2656.3 1007.3L2651.8 1014.2L2653.9 1017.0L2649.4 1020.8L2641.8 1020.8L2644.2 1027.4L2639.1 1031.5L2632.8 1030.9L2631.5 1027.4L2630.4 1022.2L2629.4 1013.5L2621.8 1010.8L2614.9 1010.1L2613.2 1003.8L2611.4 997.5L2614.9 994.7Z" fill="#f9d5c0" stroke="#f9d5c0" stroke-width="0.8" stroke-linejoin="round"/><path d="M2661.8 1160.0L2666.0 1166.3L2667.4 1170.5L2663.9 1177.9L2656.3 1181.0L2649.4 1181.5L2648.4 1189.6L2639.1 1190.5L2639.1 1197.4L2643.5 1197.4L2638.4 1202.1L2637.3 1209.4L2630.4 1214.3L2636.3 1221.9L2630.4 1232.3L2625.2 1239.3L2627.3 1248.2L2615.2 1245.9L2613.2 1237.7L2610.4 1229.6L2615.6 1216.8L2616.6 1204.5L2615.6 1192.8L2618.3 1179.2L2620.8 1168.4L2622.1 1157.1L2622.5 1143.7L2627.3 1131.9L2627.7 1122.3L2632.1 1115.9L2639.1 1113.3L2647.0 1113.6L2656.3 1120.4L2664.6 1125.7L2661.2 1132.7L2670.1 1133.4L2675.0 1126.5L2677.7 1132.3L2670.8 1137.0L2664.6 1144.5L2662.5 1153.8Z" fill="#fef7ea" stroke="#fef7ea" stroke-width="0.8" stroke-linejoin="round"/><path d="M2626.6 1249.9L2626.6 1262.8L2632.1 1264.6L2638.4 1261.6L2633.9 1257.4L2628.7 1252.8Z" fill="#fef7ea" stroke="#fef7ea" stroke-width="0.8" stroke-linejoin="round"/><path d="M2545.5 851.7L2552.7 846.6L2557.9 843.0L2564.8 841.9L2570.0 846.1L2571.4 853.2L2564.8 853.2L2561.4 851.2L2559.6 848.7L2557.9 850.7L2551.0 852.2Z" fill="#fff" stroke="#fff" stroke-width="0.8" stroke-linejoin="round"/><path d="M2561.0 875.8L2564.8 874.9L2565.5 867.9L2566.5 861.1L2570.0 857.2L2566.5 856.2L2563.1 857.2L2559.6 862.6L2561.4 867.9L2560.3 873.5Z" fill="#fff" stroke="#fff" stroke-width="0.8" stroke-linejoin="round"/><path d="M2571.7 855.7L2575.2 855.7L2582.1 855.7L2587.3 858.2L2587.3 862.6L2582.1 863.1L2581.4 869.3L2578.6 870.2L2578.3 865.5L2575.2 865.5L2575.9 860.1L2571.7 856.7Z" fill="#fff" stroke="#fff" stroke-width="0.8" stroke-linejoin="round"/><path d="M2575.5 875.8L2578.6 877.2L2583.8 875.8L2590.7 871.6L2590.7 870.7L2585.5 872.1L2578.6 874.9Z" fill="#fff" stroke="#fff" stroke-width="0.8" stroke-linejoin="round"/><path d="M2588.0 868.8L2595.9 868.8L2600.0 867.4L2599.3 864.5L2594.2 865.9L2589.3 866.9Z" fill="#fff" stroke="#fff" stroke-width="0.8" stroke-linejoin="round"/><path d="M3034.4 853.2L3041.3 850.7L3046.5 853.2L3044.8 859.2L3039.6 863.1L3037.2 863.1L3040.3 869.3L3044.8 872.6L3045.8 879.5L3049.3 886.3L3049.3 896.0L3043.1 898.6L3036.8 896.0L3032.7 895.1L3032.4 890.8L3034.4 882.7L3031.0 875.8L3027.5 870.2L3026.8 864.0L3025.1 862.1L3027.5 857.2Z" fill="#fff" stroke="#fff" stroke-width="0.8" stroke-linejoin="round"/></g><circle cx="2895.4" cy="832.4" r="100.0" fill="#ee796c" fill-opacity="0.7"/><circle cx="2872.0" cy="852.6" r="69.0" fill="#ee796c" fill-opacity="0.7"/><circle cx="2528.9" cy="895.9" r="100.0" fill="#ee796c" fill-opacity="0.7"/><circle cx="2673.2" cy="1073.0" r="73.1" fill="#ee796c" fill-opacity="0.7"/><circle cx="2856.3" cy="815.8" r="54.5" fill="#ee796c" fill-opacity="0.7"/><circle cx="2635.7" cy="1011.3" r="47.6" fill="#ee796c" fill-opacity="0.7"/><circle cx="2909.9" cy="852.6" r="43.4" fill="#ee796c" fill-opacity="0.7"/><circle cx="2914.4" cy="764.1" r="41.4" fill="#ee796c" fill-opacity="0.7"/><circle cx="2535.3" cy="777.6" r="36.6" fill="#ee796c" fill-opacity="0.7"/><circle cx="2511.6" cy="956.5" r="35.2" fill="#ee796c" fill-opacity="0.7"/><circle cx="2907.9" cy="875.2" r="35.2" fill="#ee796c" fill-opacity="0.7"/><circle cx="2853.0" cy="888.0" r="31.7" fill="#ee796c" fill-opacity="0.7"/><circle cx="2953.1" cy="748.6" r="31.0" fill="#ee796c" fill-opacity="0.7"/><circle cx="2835.6" cy="821.6" r="29.0" fill="#ee796c" fill-opacity="0.7"/><circle cx="2879.4" cy="831.7" r="29.0" fill="#ee796c" fill-opacity="0.7"/><circle cx="2898.2" cy="804.2" r="28.3" fill="#ee796c" fill-opacity="0.7"/><circle cx="2891.8" cy="851.6" r="28.3" fill="#ee796c" fill-opacity="0.7"/><circle cx="2642.6" cy="1163.6" r="26.9" fill="#ee796c" fill-opacity="0.7"/><circle cx="2835.6" cy="890.0" r="24.8" fill="#ee796c" fill-opacity="0.7"/><circle cx="2932.5" cy="827.4" r="20.7" fill="#ee796c" fill-opacity="0.7"/><circle cx="2898.2" cy="764.1" r="20.0" fill="#ee796c" fill-opacity="0.7"/><text x="2528.9" y="903.4" font-size="21" font-weight="700" text-anchor="middle" fill="#fff" fill-opacity="1.00" letter-spacing="1">122</text><text x="2673.2" y="1080.5" font-size="21" font-weight="700" text-anchor="middle" fill="#fff" fill-opacity="1.00" letter-spacing="1">83</text><text x="2856.3" y="823.3" font-size="21" font-weight="700" text-anchor="middle" fill="#fff" fill-opacity="0.45" letter-spacing="1">56</text><text x="2635.7" y="1018.8" font-size="21" font-weight="700" text-anchor="middle" fill="#fff" fill-opacity="1.00" letter-spacing="1">46</text><text x="2909.9" y="860.1" font-size="21" font-weight="700" text-anchor="middle" fill="#fff" fill-opacity="0.45" letter-spacing="1">40</text><text x="2914.4" y="771.6" font-size="21" font-weight="700" text-anchor="middle" fill="#fff" fill-opacity="0.45" letter-spacing="1">37</text><text x="2535.3" y="785.1" font-size="21" font-weight="700" text-anchor="middle" fill="#fff" fill-opacity="1.00" letter-spacing="1">30</text><text x="2511.6" y="964.0" font-size="21" font-weight="700" text-anchor="middle" fill="#fff" fill-opacity="0.45" letter-spacing="1">28</text><text x="2907.9" y="882.7" font-size="21" font-weight="700" text-anchor="middle" fill="#fff" fill-opacity="1.00" letter-spacing="1">28</text><text x="2853.0" y="895.5" font-size="21" font-weight="700" text-anchor="middle" fill="#fff" fill-opacity="0.35" letter-spacing="1">23</text><text x="2953.1" y="756.1" font-size="21" font-weight="700" text-anchor="middle" fill="#fff" fill-opacity="1.00" letter-spacing="1">22</text><text x="2835.6" y="829.1" font-size="21" font-weight="700" text-anchor="middle" fill="#fff" fill-opacity="1.00" letter-spacing="1">19</text><text x="2879.4" y="839.2" font-size="21" font-weight="700" text-anchor="middle" fill="#fff" fill-opacity="0.15" letter-spacing="1">19</text><text x="2898.2" y="811.7" font-size="21" font-weight="700" text-anchor="middle" fill="#fff" fill-opacity="1.00" letter-spacing="1">18</text><text x="2891.8" y="859.1" font-size="21" font-weight="700" text-anchor="middle" fill="#fff" fill-opacity="0.15" letter-spacing="1">18</text><text x="2642.6" y="1171.1" font-size="21" font-weight="700" text-anchor="middle" fill="#fff" fill-opacity="1.00" letter-spacing="1">16</text><text x="2835.6" y="897.5" font-size="21" font-weight="700" text-anchor="middle" fill="#fff" fill-opacity="1.00" letter-spacing="1">13</text><text x="2932.5" y="834.9" font-size="21" font-weight="700" text-anchor="middle" fill="#fff" fill-opacity="1.00" letter-spacing="1">7</text><text x="2898.2" y="771.6" font-size="21" font-weight="700" text-anchor="middle" fill="#fff" fill-opacity="1.00" letter-spacing="1">6</text><rect x="3508" y="507.6" width="30" height="90.5" fill="#f4b49c"/><rect x="3508" y="597.7" width="30" height="90.5" fill="#f6c2ab"/><rect x="3508" y="687.8" width="30" height="90.5" fill="#f8cfba"/><rect x="3508" y="777.9" width="30" height="90.5" fill="#f9d9c8"/><rect x="3508" y="868.0" width="30" height="90.5" fill="#fbe3d5"/><rect x="3508" y="958.1" width="30" height="90.5" fill="#fcecdf"/><rect x="3508" y="1048.2" width="30" height="90.5" fill="#fdf4ea"/><rect x="3508" y="1138.3" width="30" height="90.5" fill="#fffcf2"/><text x="3497.500" y="540" font-size="24" text-anchor="end" fill="#111" letter-spacing="0.6">Highest</text><text x="3497.500" y="1215" font-size="24" text-anchor="end" fill="#111" letter-spacing="0.6">Lowest</text><rect x="2786.9" y="1191.600" width="47.600" height="47.700" rx="9" fill="#7293d8"/><rect x="2847.1" y="1191.600" width="47.600" height="47.700" rx="9" fill="#7293d8"/><rect x="2907.3" y="1191.600" width="47.600" height="47.700" rx="9" fill="#d9d9d9"/><path d="M2798.400 1214.700 L2810.700 1202.100 L2823.100 1214.700 H2819.600 V1225.700 H2814 V1216.600 H2807.700 V1225.700 H2802.100 V1214.700 Z" fill="none" stroke="#fff" stroke-width="1.6" stroke-linejoin="miter"/><path d="M2865.400 1215.300 H2876.600 M2871 1209.700 V1220.900" stroke="#fff" stroke-width="1.7"/><path d="M2925.600 1215.300 H2936.800" stroke="#fff" stroke-width="1.7"/></svg>
<svg class="ic" style="left:2186.200px;top:406.800px;width:29.700px;height:29.700px" viewBox="0 0 512 512"><circle cx="256" cy="256" r="250" fill="#050505"/><path d="m55.7 199.7 30.9 30.9c6 6 14.1 9.4 22.6 9.4h21.5c8.5 0 16.6 3.4 22.6 9.4l29.3 29.3c6 6 9.4 14.1 9.4 22.6v37.5c0 8.5 3.4 16.6 9.4 22.6l13.3 13.3c6 6 9.4 14.1 9.4 22.6V416c0 17.7 14.3 32 32 32s32-14.3 32-32v-2.7c0-8.5 3.4-16.6 9.4-22.6l45.3-45.3c6-6 9.4-14.1 9.4-22.6v-34.7c0-17.7-14.3-32-32-32h-82.7c-8.5 0-16.6-3.4-22.6-9.4l-16-16c-4.2-4.2-6.6-10-6.6-16 0-12.5 10.1-22.6 22.6-22.6h34.7c12.5 0 22.6-10.1 22.6-22.6 0-6-2.4-11.8-6.6-16l-19.7-19.7c-3.9-3.8-5.9-8.7-5.9-13.8s2-10 5.7-13.7L263 89c5.8-5.8 9.1-13.7 9.1-21.9 0-7.2-2.4-13.7-6.4-18.9-3.2-.1-6.4-.2-9.6-.2-95.4 0-175.7 64.2-200.3 151.7zM464 256c0-34.6-8.4-67.2-23.4-95.8-6.4.9-12.7 3.9-17.9 9.1l-13.4 13.4c-6 6-9.4 14.1-9.4 22.6V240c0 17.7 14.3 32 32 32H456c2.5 0 5-.3 7.3-.8.4-5 .5-10.1.5-15.2zM0 256a256 256 0 1 1 512 0 256 256 0 1 1-512 0" fill="#9b9b9b"/></svg>
<div class="t " style="left:2238.0px;top:409.2px;font-size:29.00px;line-height:29.00px;color:#000;font-weight:700;letter-spacing:-0.219px;">Orders by Country</div>
<svg class="ic" style="left:3332.1px;top:409.3px;width:27.1px;height:24.6px;overflow:visible" viewBox="0 0 512 512" preserveAspectRatio="none"><path d="M65.9 228.5C79.2 135.5 159.3 64 256 64c53 0 101 21.5 135.8 56.2l.6.6 7.6 7.2h-47.9c-17.7 0-32 14.3-32 32s14.3 32 32 32h128c17.7 0 32-14.3 32-32V32c0-17.7-14.3-32-32-32s-32 14.3-32 32v53.4l-11.3-10.7C390.5 28.6 326.5 0 256 0 127 0 20.3 95.4 2.6 219.5c-2.5 17.5 9.6 33.7 27.1 36.2s33.7-9.7 36.2-27.1z" fill="#000" stroke="#000" stroke-width="20" stroke-linejoin="round"/><path d="M509.4 292.5c2.5-17.5-9.7-33.7-27.1-36.2s-33.7 9.7-36.2 27.1c-13.3 93-93.4 164.5-190.1 164.5-53 0-101-21.5-135.8-56.2l-.6-.6-7.6-7.2h47.9c17.7 0 32-14.3 32-32s-14.3-32-32-32L32 320c-8.5 0-16.7 3.4-22.7 9.5S-.1 343.7 0 352.3l1 127c.1 17.7 14.6 31.9 32.3 31.7s31.9-14.6 31.7-32.3l-.4-51.5 10.7 10.1C121.6 483.4 185.5 512 256 512c129 0 235.7-95.4 253.4-219.5" fill="#9b9b9b" stroke="#9b9b9b" stroke-width="20" stroke-linejoin="round"/></svg><svg class="ic" style="left:3387.0px;top:408.3px;width:38px;height:27px;overflow:visible" viewBox="0 0 38 27"><path d="M1.500 7 L9.900 17 V21.500 L15 25.300 L16.300 24.900 V17 L17.700 14.600 L9.800 5.200 H2.500 Z" fill="#9b9b9b" stroke="#9b9b9b" stroke-width="1.8" stroke-linejoin="round"/><g transform="translate(10.9,-3.63) scale(0.0516,0.0551)"><path d="M32 64C19.1 64 7.4 71.8 2.4 83.8s-2.2 25.7 7 34.8L192 301.3V416c0 8.5 3.4 16.6 9.4 22.6l64 64c9.2 9.2 22.9 11.9 34.9 6.9S320 492.9 320 480V301.3l182.6-182.6c9.2-9.2 11.9-22.9 6.9-34.9S492.9 64 480 64z" fill="#000" stroke="#fff" stroke-width="34" paint-order="stroke"/></g></svg><svg class="ic" style="left:3452.3px;top:406.5px;width:26.4px;height:30.2px;" viewBox="0 0 448 512" fill="#000" preserveAspectRatio="xMidYMid meet"><path d="M32 32C14.3 32 0 46.3 0 64v96c0 17.7 14.3 32 32 32s32-14.3 32-32V96h64c17.7 0 32-14.3 32-32s-14.3-32-32-32zm32 320c0-17.7-14.3-32-32-32S0 334.3 0 352v96c0 17.7 14.3 32 32 32h96c17.7 0 32-14.3 32-32s-14.3-32-32-32H64zM320 32c-17.7 0-32 14.3-32 32s14.3 32 32 32h64v64c0 17.7 14.3 32 32 32s32-14.3 32-32V64c0-17.7-14.3-32-32-32zm128 320c0-17.7-14.3-32-32-32s-32 14.3-32 32v64h-64c-17.7 0-32 14.3-32 32s14.3 32 32 32h96c17.7 0 32-14.3 32-32z"/></svg><svg class="ic" style="left:3520.5px;top:402.8px;width:10px;height:40px;overflow:visible" viewBox="0 0 10 40"><circle cx="5" cy="10.6" r="3.5" fill="#000"/><circle cx="5" cy="20" r="3.5" fill="#000"/><circle cx="5" cy="29.4" r="3.5" fill="#000"/></svg>
<svg class="ic" style="left:3562px;top:1255px;width:12px;height:12px" viewBox="0 0 12 12"><path d="M10.300 0 V10.300 H0" fill="none" stroke="#b0b0b0" stroke-width="3.2"/></svg>
<div class="b" style="left:116.7px;top:1293.5px;width:2010.2px;height:801.8px;background:#fff;border:2px solid #f4f4f4;border-radius:12px;border-bottom-left-radius:0;border-bottom-right-radius:0;"></div>
<svg class="ic" style="left:153.400px;top:1326.500px;width:32px;height:27px" viewBox="0 0 32 27" fill="none" stroke="#111" stroke-width="2.4"><rect x="1.2" y="1.2" width="29.6" height="24.6" rx="4"/><path d="M1.200 9 H30.800 M14.500 9 V25.800"/></svg>
<div class="t " style="left:206.8px;top:1326.9px;font-size:29.00px;line-height:29.00px;color:#000;font-weight:700;letter-spacing:-0.031px;">Order Stats</div>
<svg class="ic" style="left:1879.9px;top:1327.5px;width:27.1px;height:24.6px;overflow:visible" viewBox="0 0 512 512" preserveAspectRatio="none"><path d="M65.9 228.5C79.2 135.5 159.3 64 256 64c53 0 101 21.5 135.8 56.2l.6.6 7.6 7.2h-47.9c-17.7 0-32 14.3-32 32s14.3 32 32 32h128c17.7 0 32-14.3 32-32V32c0-17.7-14.3-32-32-32s-32 14.3-32 32v53.4l-11.3-10.7C390.5 28.6 326.5 0 256 0 127 0 20.3 95.4 2.6 219.5c-2.5 17.5 9.6 33.7 27.1 36.2s33.7-9.7 36.2-27.1z" fill="#000" stroke="#000" stroke-width="20" stroke-linejoin="round"/><path d="M509.4 292.5c2.5-17.5-9.7-33.7-27.1-36.2s-33.7 9.7-36.2 27.1c-13.3 93-93.4 164.5-190.1 164.5-53 0-101-21.5-135.8-56.2l-.6-.6-7.6-7.2h47.9c17.7 0 32-14.3 32-32s-14.3-32-32-32L32 320c-8.5 0-16.7 3.4-22.7 9.5S-.1 343.7 0 352.3l1 127c.1 17.7 14.6 31.9 32.3 31.7s31.9-14.6 31.7-32.3l-.4-51.5 10.7 10.1C121.6 483.4 185.5 512 256 512c129 0 235.7-95.4 253.4-219.5" fill="#9b9b9b" stroke="#9b9b9b" stroke-width="20" stroke-linejoin="round"/></svg><svg class="ic" style="left:1934.8px;top:1326.5px;width:38px;height:27px;overflow:visible" viewBox="0 0 38 27"><path d="M1.500 7 L9.900 17 V21.500 L15 25.300 L16.300 24.900 V17 L17.700 14.600 L9.800 5.200 H2.500 Z" fill="#9b9b9b" stroke="#9b9b9b" stroke-width="1.8" stroke-linejoin="round"/><g transform="translate(10.9,-3.63) scale(0.0516,0.0551)"><path d="M32 64C19.1 64 7.4 71.8 2.4 83.8s-2.2 25.7 7 34.8L192 301.3V416c0 8.5 3.4 16.6 9.4 22.6l64 64c9.2 9.2 22.9 11.9 34.9 6.9S320 492.9 320 480V301.3l182.6-182.6c9.2-9.2 11.9-22.9 6.9-34.9S492.9 64 480 64z" fill="#000" stroke="#fff" stroke-width="34" paint-order="stroke"/></g></svg><svg class="ic" style="left:2000.1px;top:1324.7px;width:26.4px;height:30.2px;" viewBox="0 0 448 512" fill="#000" preserveAspectRatio="xMidYMid meet"><path d="M32 32C14.3 32 0 46.3 0 64v96c0 17.7 14.3 32 32 32s32-14.3 32-32V96h64c17.7 0 32-14.3 32-32s-14.3-32-32-32zm32 320c0-17.7-14.3-32-32-32S0 334.3 0 352v96c0 17.7 14.3 32 32 32h96c17.7 0 32-14.3 32-32s-14.3-32-32-32H64zM320 32c-17.7 0-32 14.3-32 32s14.3 32 32 32h64v64c0 17.7 14.3 32 32 32s32-14.3 32-32V64c0-17.7-14.3-32-32-32zm128 320c0-17.7-14.3-32-32-32s-32 14.3-32 32v64h-64c-17.7 0-32 14.3-32 32s14.3 32 32 32h96c17.7 0 32-14.3 32-32z"/></svg><svg class="ic" style="left:2068.3px;top:1321.0px;width:10px;height:40px;overflow:visible" viewBox="0 0 10 40"><circle cx="5" cy="10.6" r="3.5" fill="#000"/><circle cx="5" cy="20" r="3.5" fill="#000"/><circle cx="5" cy="29.4" r="3.5" fill="#000"/></svg><svg class="ic" style="left:1818.3px;top:1325.3px;width:31px;height:31px" viewBox="0 0 31 31"><circle cx="12" cy="12" r="10" fill="none" stroke="#999" stroke-width="3.6"/><path d="M19.500 19.500 L28.500 28.500" stroke="#111" stroke-width="3.4" stroke-linecap="round"/></svg>
<div class="b" style="left:119.6px;top:1390.4px;width:2005.8px;height:3.5px;background:#f4f4f4;"></div>
<div class="b" style="left:118.8px;top:1393.7px;width:2.0px;height:700.0px;background:#f1f1f1;"></div>
<div class="b" style="left:709.7px;top:1393.7px;width:2.0px;height:700.0px;background:#f1f1f1;"></div>
<div class="b" style="left:1294.0px;top:1393.7px;width:2.0px;height:700.0px;background:#f1f1f1;"></div>
<div class="b" style="left:1618.8px;top:1393.7px;width:2.0px;height:700.0px;background:#f1f1f1;"></div>
<div class="b" style="left:2123.4px;top:1393.7px;width:2.0px;height:700.0px;background:#f1f1f1;"></div>
<div class="b" style="left:119.6px;top:1483.7px;width:2005.8px;height:2.4px;background:#f1f1f1;"></div>
<div class="b" style="left:119.6px;top:1567.0px;width:2005.8px;height:2.4px;background:#f1f1f1;"></div>
<div class="b" style="left:119.6px;top:1649.7px;width:2005.8px;height:2.4px;background:#f1f1f1;"></div>
<div class="b" style="left:119.6px;top:1733.0px;width:2005.8px;height:2.4px;background:#f1f1f1;"></div>
<div class="b" style="left:119.6px;top:1815.9px;width:2005.8px;height:2.4px;background:#f1f1f1;"></div>
<div class="b" style="left:119.6px;top:1898.7px;width:2005.8px;height:2.4px;background:#f1f1f1;"></div>
<div class="b" style="left:119.6px;top:1982.0px;width:2005.8px;height:2.4px;background:#f1f1f1;"></div>
<div class="t " style="left:143.4px;top:1426.6px;font-size:30.00px;line-height:30.00px;color:#333;font-weight:700;letter-spacing:-0.842px;">Country</div>
<div class="t " style="left:735.5px;top:1426.6px;font-size:30.00px;line-height:30.00px;color:#333;font-weight:700;letter-spacing:-0.422px;">Job Title</div>
<div class="t " style="left:1494.2px;top:1426.6px;font-size:30.00px;line-height:30.00px;color:#333;font-weight:700;letter-spacing:-0.672px;">Month</div>
<div class="t " style="left:1643.8px;top:1426.6px;font-size:30.00px;line-height:30.00px;color:#333;font-weight:700;letter-spacing:-0.590px;">Avg. Order Value</div>
<div class="t " style="left:151.1px;top:1511.4px;font-size:26.00px;line-height:26.00px;color:#333;letter-spacing:-2.560px;-webkit-text-stroke:0.40px #fff;">UK</div>
<div class="b" style="left:742.0px;top:1504.2px;width:179.6px;height:44.5px;background:#92c9c3;border-radius:8px;"></div>
<div class="t " style="left:759.7px;top:1514.4px;font-size:24.00px;line-height:24.00px;color:#1d1d1d;letter-spacing:-1.318px;-webkit-text-stroke:0.40px #92c9c3;">Sales Manager</div>
<div class="t " style="left:1542.8px;top:1511.4px;font-size:26.00px;line-height:26.00px;color:#333;letter-spacing:-0.059px;-webkit-text-stroke:0.40px #fff;">July</div>
<div class="b" style="left:1650.7px;top:1504.4px;width:443.0px;height:39.0px;background:#e0e0e0;border-radius:8px;overflow:hidden;"><div style="position:absolute;left:0;top:0;height:100%;width:288.1px;background:#92c9c3"></div></div>
<div class="t " style="left:1834.0px;top:1512.3px;font-size:24.00px;line-height:24.00px;color:#222;letter-spacing:0.515px;">$65.04</div>
<div class="t " style="left:151.1px;top:1594.7px;font-size:26.00px;line-height:26.00px;color:#333;letter-spacing:-2.560px;-webkit-text-stroke:0.40px #fff;">UK</div>
<div class="b" style="left:742.0px;top:1587.5px;width:242.6px;height:44.5px;background:#2f4654;border-radius:8px;"></div>
<div class="t " style="left:759.7px;top:1597.7px;font-size:24.00px;line-height:24.00px;color:#fff;letter-spacing:-1.042px;-webkit-text-stroke:0.40px #2f4654;">Sales Representative</div>
<div class="t " style="left:1542.8px;top:1594.7px;font-size:26.00px;line-height:26.00px;color:#333;letter-spacing:-0.059px;-webkit-text-stroke:0.40px #fff;">July</div>
<div class="b" style="left:1650.7px;top:1587.7px;width:443.0px;height:39.0px;background:#e0e0e0;border-radius:8px;overflow:hidden;"><div style="position:absolute;left:0;top:0;height:100%;width:259.8px;background:#92c9c3"></div></div>
<div class="t " style="left:1834.0px;top:1595.6px;font-size:24.00px;line-height:24.00px;color:#222;letter-spacing:0.515px;">$58.64</div>
<div class="t " style="left:151.1px;top:1677.4px;font-size:26.00px;line-height:26.00px;color:#333;letter-spacing:-2.421px;-webkit-text-stroke:0.40px #fff;">USA</div>
<div class="b" style="left:742.0px;top:1670.2px;width:242.6px;height:44.5px;background:#2f4654;border-radius:8px;"></div>
<div class="t " style="left:759.7px;top:1680.4px;font-size:24.00px;line-height:24.00px;color:#fff;letter-spacing:-1.042px;-webkit-text-stroke:0.40px #2f4654;">Sales Representative</div>
<div class="t " style="left:1542.8px;top:1677.4px;font-size:26.00px;line-height:26.00px;color:#333;letter-spacing:-0.059px;-webkit-text-stroke:0.40px #fff;">July</div>
<div class="b" style="left:1650.7px;top:1670.4px;width:443.0px;height:39.0px;background:#e0e0e0;border-radius:8px;overflow:hidden;"><div style="position:absolute;left:0;top:0;height:100%;width:364.2px;background:#92c9c3"></div></div>
<div class="t " style="left:1834.0px;top:1678.3px;font-size:24.00px;line-height:24.00px;color:#222;letter-spacing:0.515px;">$82.22</div>
<div class="t " style="left:151.1px;top:1760.7px;font-size:26.00px;line-height:26.00px;color:#333;letter-spacing:-2.421px;-webkit-text-stroke:0.40px #fff;">USA</div>
<div class="b" style="left:742.0px;top:1753.5px;width:278.4px;height:44.5px;background:#e4c774;border-radius:8px;"></div>
<div class="t " style="left:759.7px;top:1763.7px;font-size:24.00px;line-height:24.00px;color:#1d1d1d;letter-spacing:-0.801px;-webkit-text-stroke:0.40px #e4c774;">Inside Sales Coordinator</div>
<div class="t " style="left:1542.8px;top:1760.7px;font-size:26.00px;line-height:26.00px;color:#333;letter-spacing:-0.059px;-webkit-text-stroke:0.40px #fff;">July</div>
<div class="b" style="left:1650.7px;top:1753.7px;width:443.0px;height:39.0px;background:#e0e0e0;border-radius:8px;overflow:hidden;"><div style="position:absolute;left:0;top:0;height:100%;width:119.5px;background:#92c9c3"></div></div>
<div class="t " style="left:1834.0px;top:1761.6px;font-size:24.00px;line-height:24.00px;color:#222;letter-spacing:0.515px;">$26.97</div>
<div class="t " style="left:151.1px;top:1843.6px;font-size:26.00px;line-height:26.00px;color:#333;letter-spacing:-2.421px;-webkit-text-stroke:0.40px #fff;">USA</div>
<div class="b" style="left:742.0px;top:1836.4px;width:240.5px;height:44.5px;background:#e8a56c;border-radius:8px;"></div>
<div class="t " style="left:759.7px;top:1846.6px;font-size:24.00px;line-height:24.00px;color:#1d1d1d;letter-spacing:-1.047px;-webkit-text-stroke:0.40px #e8a56c;">Vice President, Sales</div>
<div class="t " style="left:1542.8px;top:1843.6px;font-size:26.00px;line-height:26.00px;color:#333;letter-spacing:-0.059px;-webkit-text-stroke:0.40px #fff;">July</div>
<div class="b" style="left:1650.7px;top:1836.6px;width:443.0px;height:39.0px;background:#e0e0e0;border-radius:8px;overflow:hidden;"><div style="position:absolute;left:0;top:0;height:100%;width:384.8px;background:#92c9c3"></div></div>
<div class="t " style="left:1834.0px;top:1844.5px;font-size:24.00px;line-height:24.00px;color:#222;letter-spacing:0.515px;">$86.87</div>
<div class="t " style="left:151.1px;top:1926.4px;font-size:26.00px;line-height:26.00px;color:#333;letter-spacing:-2.421px;-webkit-text-stroke:0.40px #fff;">USA</div>
<div class="b" style="left:742.0px;top:1919.2px;width:242.6px;height:44.5px;background:#2f4654;border-radius:8px;"></div>
<div class="t " style="left:759.7px;top:1929.4px;font-size:24.00px;line-height:24.00px;color:#fff;letter-spacing:-1.042px;-webkit-text-stroke:0.40px #2f4654;">Sales Representative</div>
<div class="t " style="left:1509.7px;top:1926.4px;font-size:26.00px;line-height:26.00px;color:#333;letter-spacing:-0.308px;-webkit-text-stroke:0.40px #fff;">August</div>
<div class="b" style="left:1650.7px;top:1919.4px;width:443.0px;height:39.0px;background:#e0e0e0;border-radius:8px;overflow:hidden;"><div style="position:absolute;left:0;top:0;height:100%;width:343.3px;background:#92c9c3"></div></div>
<div class="t " style="left:1834.0px;top:1927.3px;font-size:24.00px;line-height:24.00px;color:#222;letter-spacing:0.515px;">$77.49</div>
<div class="t " style="left:151.1px;top:2009.7px;font-size:26.00px;line-height:26.00px;color:#333;letter-spacing:-2.560px;-webkit-text-stroke:0.40px #fff;">UK</div>
<div class="b" style="left:742.0px;top:2002.5px;width:242.6px;height:44.5px;background:#2f4654;border-radius:8px;"></div>
<div class="t " style="left:759.7px;top:2012.7px;font-size:24.00px;line-height:24.00px;color:#fff;letter-spacing:-1.042px;-webkit-text-stroke:0.40px #2f4654;">Sales Representative</div>
<div class="t " style="left:1509.7px;top:2009.7px;font-size:26.00px;line-height:26.00px;color:#333;letter-spacing:-0.308px;-webkit-text-stroke:0.40px #fff;">August</div>
<div class="b" style="left:1650.7px;top:2002.7px;width:443.0px;height:39.0px;background:#e0e0e0;border-radius:8px;overflow:hidden;"><div style="position:absolute;left:0;top:0;height:100%;width:430.6px;background:#92c9c3"></div></div>
<div class="t " style="left:1834.0px;top:2010.6px;font-size:24.00px;line-height:24.00px;color:#222;letter-spacing:0.515px;">$97.21</div>
<div class="b" style="left:119.6px;top:2049.2px;width:2005.8px;height:10.0px;background:#c5ede3;"></div>
<div class="b" style="left:2148.5px;top:1293.5px;width:1430.4px;height:801.8px;background:#fff;border:2px solid #f4f4f4;border-radius:12px;border-bottom-left-radius:0;border-bottom-right-radius:0;"></div>
<svg class="ic" style="left:2186px;top:1327.300px;width:31px;height:26.500px" viewBox="0 0 31 26.500" fill="none" stroke="#111" stroke-width="2.3"><rect x="1.2" y="1.2" width="28.6" height="24.1" rx="4"/><path d="M1.200 8.500 H29.800 M10 1.200 V25.300"/><path d="M16 19.500 H23.500 V14 M16 19.500 L18.500 17 M16 19.500 L18.500 22" stroke-width="1.8" stroke-linecap="round" stroke-linejoin="round"/></svg>
<div class="t " style="left:2238.5px;top:1327.8px;font-size:29.00px;line-height:29.00px;color:#000;font-weight:700;letter-spacing:-0.260px;">Orders by Country &amp; Employee</div>
<svg class="ic" style="left:3332.1px;top:1328.0px;width:27.1px;height:24.6px;overflow:visible" viewBox="0 0 512 512" preserveAspectRatio="none"><path d="M65.9 228.5C79.2 135.5 159.3 64 256 64c53 0 101 21.5 135.8 56.2l.6.6 7.6 7.2h-47.9c-17.7 0-32 14.3-32 32s14.3 32 32 32h128c17.7 0 32-14.3 32-32V32c0-17.7-14.3-32-32-32s-32 14.3-32 32v53.4l-11.3-10.7C390.5 28.6 326.5 0 256 0 127 0 20.3 95.4 2.6 219.5c-2.5 17.5 9.6 33.7 27.1 36.2s33.7-9.7 36.2-27.1z" fill="#000" stroke="#000" stroke-width="20" stroke-linejoin="round"/><path d="M509.4 292.5c2.5-17.5-9.7-33.7-27.1-36.2s-33.7 9.7-36.2 27.1c-13.3 93-93.4 164.5-190.1 164.5-53 0-101-21.5-135.8-56.2l-.6-.6-7.6-7.2h47.9c17.7 0 32-14.3 32-32s-14.3-32-32-32L32 320c-8.5 0-16.7 3.4-22.7 9.5S-.1 343.7 0 352.3l1 127c.1 17.7 14.6 31.9 32.3 31.7s31.9-14.6 31.7-32.3l-.4-51.5 10.7 10.1C121.6 483.4 185.5 512 256 512c129 0 235.7-95.4 253.4-219.5" fill="#9b9b9b" stroke="#9b9b9b" stroke-width="20" stroke-linejoin="round"/></svg><svg class="ic" style="left:3387.0px;top:1327.0px;width:38px;height:27px;overflow:visible" viewBox="0 0 38 27"><path d="M1.500 7 L9.900 17 V21.500 L15 25.300 L16.300 24.900 V17 L17.700 14.600 L9.800 5.200 H2.500 Z" fill="#9b9b9b" stroke="#9b9b9b" stroke-width="1.8" stroke-linejoin="round"/><g transform="translate(10.9,-3.63) scale(0.0516,0.0551)"><path d="M32 64C19.1 64 7.4 71.8 2.4 83.8s-2.2 25.7 7 34.8L192 301.3V416c0 8.5 3.4 16.6 9.4 22.6l64 64c9.2 9.2 22.9 11.9 34.9 6.9S320 492.9 320 480V301.3l182.6-182.6c9.2-9.2 11.9-22.9 6.9-34.9S492.9 64 480 64z" fill="#000" stroke="#fff" stroke-width="34" paint-order="stroke"/></g></svg><svg class="ic" style="left:3452.3px;top:1325.2px;width:26.4px;height:30.2px;" viewBox="0 0 448 512" fill="#000" preserveAspectRatio="xMidYMid meet"><path d="M32 32C14.3 32 0 46.3 0 64v96c0 17.7 14.3 32 32 32s32-14.3 32-32V96h64c17.7 0 32-14.3 32-32s-14.3-32-32-32zm32 320c0-17.7-14.3-32-32-32S0 334.3 0 352v96c0 17.7 14.3 32 32 32h96c17.7 0 32-14.3 32-32s-14.3-32-32-32H64zM320 32c-17.7 0-32 14.3-32 32s14.3 32 32 32h64v64c0 17.7 14.3 32 32 32s32-14.3 32-32V64c0-17.7-14.3-32-32-32zm128 320c0-17.7-14.3-32-32-32s-32 14.3-32 32v64h-64c-17.7 0-32 14.3-32 32s14.3 32 32 32h96c17.7 0 32-14.3 32-32z"/></svg><svg class="ic" style="left:3520.5px;top:1321.5px;width:10px;height:40px;overflow:visible" viewBox="0 0 10 40"><circle cx="5" cy="10.6" r="3.5" fill="#000"/><circle cx="5" cy="20" r="3.5" fill="#000"/><circle cx="5" cy="29.4" r="3.5" fill="#000"/></svg>
<div class="b" style="left:2164.6px;top:1385.6px;width:1398.4px;height:700.0px;overflow:hidden;"><div class="b" style="left:0.0px;top:0.0px;width:1598.4px;height:212.4px;background:#fafafa;"></div><div class="b" style="left:0.0px;top:212.4px;width:299.0px;height:500.0px;background:#fafafa;"></div><div class="b" style="left:299.0px;top:213.4px;width:115.4px;height:72.7px;background:#f1a440;"></div><div class="b" style="left:414.4px;top:213.4px;width:142.0px;height:72.7px;background:#f1a440;"></div><div class="b" style="left:556.4px;top:213.4px;width:103.9px;height:72.7px;background:#f1a440;"></div><div class="b" style="left:660.3px;top:213.4px;width:132.1px;height:72.7px;background:#f1a440;"></div><div class="b" style="left:792.4px;top:213.4px;width:177.8px;height:72.7px;background:#f1a440;"></div><div class="b" style="left:970.2px;top:213.4px;width:159.3px;height:72.7px;background:#f1a440;"></div><div class="b" style="left:1129.5px;top:213.4px;width:120.0px;height:72.7px;background:#f1a440;"></div><div class="b" style="left:1249.5px;top:213.4px;width:117.4px;height:72.7px;background:#f1a440;"></div><div class="b" style="left:1366.9px;top:213.4px;width:108.5px;height:72.7px;background:#f6c278;"></div><div class="b" style="left:299.0px;top:286.1px;width:115.4px;height:71.6px;background:#f6c278;"></div><div class="b" style="left:414.4px;top:286.1px;width:142.0px;height:71.6px;background:#f6c278;"></div><div class="b" style="left:556.4px;top:286.1px;width:103.9px;height:71.6px;background:#f6c278;"></div><div class="b" style="left:660.3px;top:286.1px;width:132.1px;height:71.6px;background:#f1a440;"></div><div class="b" style="left:792.4px;top:286.1px;width:177.8px;height:71.6px;background:#f1a440;"></div><div class="b" style="left:970.2px;top:286.1px;width:159.3px;height:71.6px;background:#f1a440;"></div><div class="b" style="left:1129.5px;top:286.1px;width:120.0px;height:71.6px;background:#f1a440;"></div><div class="b" style="left:1249.5px;top:286.1px;width:117.4px;height:71.6px;background:#f1a440;"></div><div class="b" style="left:1366.9px;top:286.1px;width:108.5px;height:71.6px;background:#ffffff;"></div><div class="b" style="left:299.0px;top:357.7px;width:115.4px;height:72.1px;background:#ffffff;"></div><div class="b" style="left:414.4px;top:357.7px;width:142.0px;height:72.1px;background:#63c2b7;"></div><div class="b" style="left:556.4px;top:357.7px;width:103.9px;height:72.1px;background:#d5f2f0;"></div><div class="b" style="left:660.3px;top:357.7px;width:132.1px;height:72.1px;background:#f6c278;"></div><div class="b" style="left:792.4px;top:357.7px;width:177.8px;height:72.1px;background:#f1a440;"></div><div class="b" style="left:970.2px;top:357.7px;width:159.3px;height:72.1px;background:#f6c278;"></div><div class="b" style="left:1129.5px;top:357.7px;width:120.0px;height:72.1px;background:#f6c278;"></div><div class="b" style="left:1249.5px;top:357.7px;width:117.4px;height:72.1px;background:#f1a440;"></div><div class="b" style="left:1366.9px;top:357.7px;width:108.5px;height:72.1px;background:#63c2b7;"></div><div class="b" style="left:299.0px;top:429.8px;width:115.4px;height:72.2px;background:#ffffff;"></div><div class="b" style="left:414.4px;top:429.8px;width:142.0px;height:72.2px;background:#d5f2f0;"></div><div class="b" style="left:556.4px;top:429.8px;width:103.9px;height:72.2px;background:#f6c278;"></div><div class="b" style="left:660.3px;top:429.8px;width:132.1px;height:72.2px;background:#f1a440;"></div><div class="b" style="left:792.4px;top:429.8px;width:177.8px;height:72.2px;background:#f1a440;"></div><div class="b" style="left:970.2px;top:429.8px;width:159.3px;height:72.2px;background:#f6c278;"></div><div class="b" style="left:1129.5px;top:429.8px;width:120.0px;height:72.2px;background:#f1a440;"></div><div class="b" style="left:1249.5px;top:429.8px;width:117.4px;height:72.2px;background:#f6c278;"></div><div class="b" style="left:1366.9px;top:429.8px;width:108.5px;height:72.2px;background:#63c2b7;"></div><div class="b" style="left:299.0px;top:502.0px;width:115.4px;height:72.1px;background:#f1a440;"></div><div class="b" style="left:414.4px;top:502.0px;width:142.0px;height:72.1px;background:#f6c278;"></div><div class="b" style="left:556.4px;top:502.0px;width:103.9px;height:72.1px;background:#f1a440;"></div><div class="b" style="left:660.3px;top:502.0px;width:132.1px;height:72.1px;background:#f1a440;"></div><div class="b" style="left:792.4px;top:502.0px;width:177.8px;height:72.1px;background:#f1a440;"></div><div class="b" style="left:970.2px;top:502.0px;width:159.3px;height:72.1px;background:#f1a440;"></div><div class="b" style="left:1129.5px;top:502.0px;width:120.0px;height:72.1px;background:#f1a440;"></div><div class="b" style="left:1249.5px;top:502.0px;width:117.4px;height:72.1px;background:#f1a440;"></div><div class="b" style="left:1366.9px;top:502.0px;width:108.5px;height:72.1px;background:#f1a440;"></div><div class="b" style="left:299.0px;top:574.1px;width:115.4px;height:71.6px;background:#f6c278;"></div><div class="b" style="left:414.4px;top:574.1px;width:142.0px;height:71.6px;background:#d5f2f0;"></div><div class="b" style="left:556.4px;top:574.1px;width:103.9px;height:71.6px;background:#ffffff;"></div><div class="b" style="left:660.3px;top:574.1px;width:132.1px;height:71.6px;background:#f1a440;"></div><div class="b" style="left:792.4px;top:574.1px;width:177.8px;height:71.6px;background:#f1a440;"></div><div class="b" style="left:970.2px;top:574.1px;width:159.3px;height:71.6px;background:#f6c278;"></div><div class="b" style="left:1129.5px;top:574.1px;width:120.0px;height:71.6px;background:#f1a440;"></div><div class="b" style="left:1249.5px;top:574.1px;width:117.4px;height:71.6px;background:#f6c278;"></div><div class="b" style="left:1366.9px;top:574.1px;width:108.5px;height:71.6px;background:#63c2b7;"></div><div class="b" style="left:299.0px;top:645.7px;width:115.4px;height:72.1px;background:#f6c278;"></div><div class="b" style="left:414.4px;top:645.7px;width:142.0px;height:72.1px;background:#d5f2f0;"></div><div class="b" style="left:556.4px;top:645.7px;width:103.9px;height:72.1px;background:#f6c278;"></div><div class="b" style="left:660.3px;top:645.7px;width:132.1px;height:72.1px;background:#f1a440;"></div><div class="b" style="left:792.4px;top:645.7px;width:177.8px;height:72.1px;background:#f1a440;"></div><div class="b" style="left:970.2px;top:645.7px;width:159.3px;height:72.1px;background:#f6c278;"></div><div class="b" style="left:1129.5px;top:645.7px;width:120.0px;height:72.1px;background:#f1a440;"></div><div class="b" style="left:1249.5px;top:645.7px;width:117.4px;height:72.1px;background:#f1a440;"></div><div class="b" style="left:1366.9px;top:645.7px;width:108.5px;height:72.1px;background:#d5f2f0;"></div><div class="b" style="left:298.0px;top:0.0px;width:2.0px;height:212.4px;background:#d9d9dd;"></div><div class="b" style="left:413.4px;top:0.0px;width:2.0px;height:212.4px;background:#d9d9dd;"></div><div class="b" style="left:555.4px;top:0.0px;width:2.0px;height:212.4px;background:#d9d9dd;"></div><div class="b" style="left:659.3px;top:0.0px;width:2.0px;height:212.4px;background:#d9d9dd;"></div><div class="b" style="left:791.4px;top:0.0px;width:2.0px;height:212.4px;background:#d9d9dd;"></div><div class="b" style="left:969.2px;top:0.0px;width:2.0px;height:212.4px;background:#d9d9dd;"></div><div class="b" style="left:1128.5px;top:0.0px;width:2.0px;height:212.4px;background:#d9d9dd;"></div><div class="b" style="left:1248.5px;top:0.0px;width:2.0px;height:212.4px;background:#d9d9dd;"></div><div class="b" style="left:1365.9px;top:0.0px;width:2.0px;height:212.4px;background:#d9d9dd;"></div><div class="b" style="left:298.0px;top:0.0px;width:2.0px;height:800.0px;background:#d9d9dd;"></div><div class="b" style="left:299.0px;top:104.6px;width:1200.0px;height:2.0px;background:#d9d9dd;"></div><div class="b" style="left:0.0px;top:211.4px;width:1500.0px;height:2.2px;background:#d8dae0;"></div><div class="b" style="left:0.0px;top:284.1px;width:1500.0px;height:2.2px;background:#d8dae0;"></div><div class="b" style="left:0.0px;top:355.7px;width:1500.0px;height:2.2px;background:#d8dae0;"></div><div class="b" style="left:0.0px;top:427.8px;width:1500.0px;height:2.2px;background:#d8dae0;"></div><div class="b" style="left:0.0px;top:500.0px;width:1500.0px;height:2.2px;background:#d8dae0;"></div><div class="b" style="left:0.0px;top:572.1px;width:1500.0px;height:2.2px;background:#d8dae0;"></div><div class="b" style="left:0.0px;top:643.7px;width:1500.0px;height:2.2px;background:#d8dae0;"></div></div>
<div class="b" style="left:2164.6px;top:1385.6px;width:1398.4px;height:700.0px;overflow:hidden;"><div class="t " style="left:16.2px;top:21.3px;font-size:26.00px;line-height:26.00px;color:#333;font-weight:700;letter-spacing:-0.345px;">Emp. Name</div><div class="t " style="left:315.7px;top:21.3px;font-size:26.00px;line-height:26.00px;color:#333;font-weight:700;letter-spacing:-0.644px;">France</div><div class="t " style="left:315.7px;top:128.1px;font-size:26.00px;line-height:26.00px;color:#333;font-weight:700;letter-spacing:-0.717px;">Count</div><div class="t " style="left:431.1px;top:21.3px;font-size:26.00px;line-height:26.00px;color:#333;font-weight:700;letter-spacing:-0.346px;">Germany</div><div class="t " style="left:431.1px;top:128.1px;font-size:26.00px;line-height:26.00px;color:#333;font-weight:700;letter-spacing:-0.717px;">Count</div><div class="t " style="left:573.1px;top:21.3px;font-size:26.00px;line-height:26.00px;color:#333;font-weight:700;letter-spacing:-0.134px;">Brazil</div><div class="t " style="left:573.1px;top:128.1px;font-size:26.00px;line-height:26.00px;color:#333;font-weight:700;letter-spacing:-0.717px;">Count</div><div class="t " style="left:677.0px;top:21.3px;font-size:26.00px;line-height:26.00px;color:#333;font-weight:700;letter-spacing:-0.438px;">Belgium</div><div class="t " style="left:677.0px;top:128.1px;font-size:26.00px;line-height:26.00px;color:#333;font-weight:700;letter-spacing:-0.717px;">Count</div><div class="t " style="left:809.1px;top:21.3px;font-size:26.00px;line-height:26.00px;color:#333;font-weight:700;letter-spacing:0.066px;">Switzerland</div><div class="t " style="left:809.1px;top:128.1px;font-size:26.00px;line-height:26.00px;color:#333;font-weight:700;letter-spacing:-0.717px;">Count</div><div class="t " style="left:986.9px;top:21.3px;font-size:26.00px;line-height:26.00px;color:#333;font-weight:700;letter-spacing:-0.015px;">Venezuela</div><div class="t " style="left:986.9px;top:128.1px;font-size:26.00px;line-height:26.00px;color:#333;font-weight:700;letter-spacing:-0.717px;">Count</div><div class="t " style="left:1146.2px;top:21.3px;font-size:26.00px;line-height:26.00px;color:#333;font-weight:700;letter-spacing:-0.297px;">Austria</div><div class="t " style="left:1146.2px;top:128.1px;font-size:26.00px;line-height:26.00px;color:#333;font-weight:700;letter-spacing:-0.717px;">Count</div><div class="t " style="left:1266.2px;top:21.3px;font-size:26.00px;line-height:26.00px;color:#333;font-weight:700;letter-spacing:-0.558px;">Mexico</div><div class="t " style="left:1266.2px;top:128.1px;font-size:26.00px;line-height:26.00px;color:#333;font-weight:700;letter-spacing:-0.717px;">Count</div><div class="t " style="left:1383.6px;top:21.3px;font-size:26.00px;line-height:26.00px;color:#333;font-weight:700;letter-spacing:-0.299px;">USA</div><div class="t " style="left:1383.6px;top:128.1px;font-size:26.00px;line-height:26.00px;color:#333;font-weight:700;letter-spacing:-0.717px;">Count</div><div class="t " style="left:16.2px;top:237.1px;font-size:26.00px;line-height:26.00px;color:#333;letter-spacing:-0.408px;-webkit-text-stroke:0.40px #fafafa;">Steven</div><div class="t " style="left:315.7px;top:236.7px;font-size:26.50px;line-height:26.50px;color:#111;">5</div><div class="t " style="left:431.1px;top:236.7px;font-size:26.50px;line-height:26.50px;color:#111;">4</div><div class="t " style="left:573.1px;top:236.7px;font-size:26.50px;line-height:26.50px;color:#111;">5</div><div class="t " style="left:677.0px;top:236.7px;font-size:26.50px;line-height:26.50px;color:#111;">4</div><div class="t " style="left:809.1px;top:236.7px;font-size:26.50px;line-height:26.50px;color:#111;">1</div><div class="t " style="left:986.9px;top:236.7px;font-size:26.50px;line-height:26.50px;color:#111;">3</div><div class="t " style="left:1146.2px;top:236.7px;font-size:26.50px;line-height:26.50px;color:#111;">0</div><div class="t " style="left:1266.2px;top:236.7px;font-size:26.50px;line-height:26.50px;color:#111;">1</div><div class="t " style="left:1383.6px;top:236.7px;font-size:26.50px;line-height:26.50px;color:#111;">6</div><div class="t " style="left:16.2px;top:309.8px;font-size:26.00px;line-height:26.00px;color:#333;letter-spacing:0.201px;-webkit-text-stroke:0.40px #fafafa;">Michael</div><div class="t " style="left:315.7px;top:309.4px;font-size:26.50px;line-height:26.50px;color:#111;">9</div><div class="t " style="left:431.1px;top:309.4px;font-size:26.50px;line-height:26.50px;color:#111;">9</div><div class="t " style="left:573.1px;top:309.4px;font-size:26.50px;line-height:26.50px;color:#111;">8</div><div class="t " style="left:677.0px;top:309.4px;font-size:26.50px;line-height:26.50px;color:#111;">1</div><div class="t " style="left:809.1px;top:309.4px;font-size:26.50px;line-height:26.50px;color:#111;">2</div><div class="t " style="left:986.9px;top:309.4px;font-size:26.50px;line-height:26.50px;color:#111;">2</div><div class="t " style="left:1146.2px;top:309.4px;font-size:26.50px;line-height:26.50px;color:#111;">4</div><div class="t " style="left:1266.2px;top:309.4px;font-size:26.50px;line-height:26.50px;color:#111;">0</div><div class="t " style="left:1383.6px;top:309.4px;font-size:26.50px;line-height:26.50px;color:#111;">12</div><div class="t " style="left:16.2px;top:381.4px;font-size:26.00px;line-height:26.00px;color:#333;letter-spacing:0.057px;-webkit-text-stroke:0.40px #fafafa;">Margaret</div><div class="t " style="left:315.7px;top:381.0px;font-size:26.50px;line-height:26.50px;color:#111;">14</div><div class="t " style="left:431.1px;top:381.0px;font-size:26.50px;line-height:26.50px;color:#111;">25</div><div class="t " style="left:573.1px;top:381.0px;font-size:26.50px;line-height:26.50px;color:#111;">20</div><div class="t " style="left:677.0px;top:381.0px;font-size:26.50px;line-height:26.50px;color:#111;">6</div><div class="t " style="left:809.1px;top:381.0px;font-size:26.50px;line-height:26.50px;color:#111;">4</div><div class="t " style="left:986.9px;top:381.0px;font-size:26.50px;line-height:26.50px;color:#111;">8</div><div class="t " style="left:1146.2px;top:381.0px;font-size:26.50px;line-height:26.50px;color:#111;">6</div><div class="t " style="left:1266.2px;top:381.0px;font-size:26.50px;line-height:26.50px;color:#111;">4</div><div class="t " style="left:1383.6px;top:381.0px;font-size:26.50px;line-height:26.50px;color:#111;">25</div><div class="t " style="left:16.2px;top:453.5px;font-size:26.00px;line-height:26.00px;color:#333;letter-spacing:0.379px;-webkit-text-stroke:0.40px #fafafa;">Janet</div><div class="t " style="left:315.7px;top:453.1px;font-size:26.50px;line-height:26.50px;color:#111;">13</div><div class="t " style="left:431.1px;top:453.1px;font-size:26.50px;line-height:26.50px;color:#111;">19</div><div class="t " style="left:573.1px;top:453.1px;font-size:26.50px;line-height:26.50px;color:#111;">10</div><div class="t " style="left:677.0px;top:453.1px;font-size:26.50px;line-height:26.50px;color:#111;">1</div><div class="t " style="left:809.1px;top:453.1px;font-size:26.50px;line-height:26.50px;color:#111;">3</div><div class="t " style="left:986.9px;top:453.1px;font-size:26.50px;line-height:26.50px;color:#111;">8</div><div class="t " style="left:1146.2px;top:453.1px;font-size:26.50px;line-height:26.50px;color:#111;">5</div><div class="t " style="left:1266.2px;top:453.1px;font-size:26.50px;line-height:26.50px;color:#111;">6</div><div class="t " style="left:1383.6px;top:453.1px;font-size:26.50px;line-height:26.50px;color:#111;">21</div><div class="t " style="left:16.2px;top:525.7px;font-size:26.00px;line-height:26.00px;color:#333;letter-spacing:-0.181px;-webkit-text-stroke:0.40px #fafafa;">Anne</div><div class="t " style="left:315.7px;top:525.3px;font-size:26.50px;line-height:26.50px;color:#111;">3</div><div class="t " style="left:431.1px;top:525.3px;font-size:26.50px;line-height:26.50px;color:#111;">9</div><div class="t " style="left:573.1px;top:525.3px;font-size:26.50px;line-height:26.50px;color:#111;">3</div><div class="t " style="left:677.0px;top:525.3px;font-size:26.50px;line-height:26.50px;color:#111;">2</div><div class="t " style="left:809.1px;top:525.3px;font-size:26.50px;line-height:26.50px;color:#111;">2</div><div class="t " style="left:986.9px;top:525.3px;font-size:26.50px;line-height:26.50px;color:#111;">1</div><div class="t " style="left:1146.2px;top:525.3px;font-size:26.50px;line-height:26.50px;color:#111;">3</div><div class="t " style="left:1266.2px;top:525.3px;font-size:26.50px;line-height:26.50px;color:#111;">0</div><div class="t " style="left:1383.6px;top:525.3px;font-size:26.50px;line-height:26.50px;color:#111;">3</div><div class="t " style="left:16.2px;top:597.8px;font-size:26.00px;line-height:26.00px;color:#333;letter-spacing:-0.140px;-webkit-text-stroke:0.40px #fafafa;">Nancy</div><div class="t " style="left:315.7px;top:597.4px;font-size:26.50px;line-height:26.50px;color:#111;">9</div><div class="t " style="left:431.1px;top:597.4px;font-size:26.50px;line-height:26.50px;color:#111;">19</div><div class="t " style="left:573.1px;top:597.4px;font-size:26.50px;line-height:26.50px;color:#111;">11</div><div class="t " style="left:677.0px;top:597.4px;font-size:26.50px;line-height:26.50px;color:#111;">1</div><div class="t " style="left:809.1px;top:597.4px;font-size:26.50px;line-height:26.50px;color:#111;">2</div><div class="t " style="left:986.9px;top:597.4px;font-size:26.50px;line-height:26.50px;color:#111;">8</div><div class="t " style="left:1146.2px;top:597.4px;font-size:26.50px;line-height:26.50px;color:#111;">5</div><div class="t " style="left:1266.2px;top:597.4px;font-size:26.50px;line-height:26.50px;color:#111;">6</div><div class="t " style="left:1383.6px;top:597.4px;font-size:26.50px;line-height:26.50px;color:#111;">22</div><div class="t " style="left:16.2px;top:669.4px;font-size:26.00px;line-height:26.00px;color:#333;letter-spacing:0.327px;-webkit-text-stroke:0.40px #fafafa;">Robert</div><div class="t " style="left:315.7px;top:669.0px;font-size:26.50px;line-height:26.50px;color:#111;">7</div><div class="t " style="left:431.1px;top:669.0px;font-size:26.50px;line-height:26.50px;color:#111;">17</div><div class="t " style="left:573.1px;top:669.0px;font-size:26.50px;line-height:26.50px;color:#111;">9</div><div class="t " style="left:677.0px;top:669.0px;font-size:26.50px;line-height:26.50px;color:#111;">3</div><div class="t " style="left:809.1px;top:669.0px;font-size:26.50px;line-height:26.50px;color:#111;">2</div><div class="t " style="left:986.9px;top:669.0px;font-size:26.50px;line-height:26.50px;color:#111;">7</div><div class="t " style="left:1146.2px;top:669.0px;font-size:26.50px;line-height:26.50px;color:#111;">4</div><div class="t " style="left:1266.2px;top:669.0px;font-size:26.50px;line-height:26.50px;color:#111;">5</div><div class="t " style="left:1383.6px;top:669.0px;font-size:26.50px;line-height:26.50px;color:#111;">18</div></div>
<div class="b" style="left:0.0px;top:96.0px;width:94.0px;height:1962.0px;background:#fff;"></div>
<div class="b" style="left:94.0px;top:96.0px;width:2.0px;height:1962.0px;background:#d6d6d6;"></div>
<div class="b" style="left:15.0px;top:111.0px;width:64.0px;height:68.0px;background:#8fe3bb;border-radius:12px;"></div>
<svg class="ic" style="left:32px;top:127.500px;width:34.500px;height:34.500px" viewBox="0 0 36 36"><circle cx="18" cy="18" r="15.5" fill="none" stroke="#111" stroke-width="3.2"/><circle cx="18" cy="24" r="3.6" fill="#111"/><path d="M18.6 23 L23.5 10" stroke="#111" stroke-width="3" stroke-linecap="round"/><circle cx="9.5" cy="18" r="1.7" fill="#111"/><circle cx="12" cy="12" r="1.7" fill="#111"/><circle cx="18" cy="9.5" r="1.7" fill="#111"/><circle cx="26.5" cy="18" r="1.7" fill="#111"/></svg>
<svg class="ic" style="left:31px;top:216px;width:36px;height:36px" viewBox="0 0 36 36"><circle cx="14.5" cy="14.5" r="12" fill="none" stroke="#111" stroke-width="3.2"/><path d="M23.5 23.5 L33 33" stroke="#111" stroke-width="3.4" stroke-linecap="round"/></svg>
<svg class="ic" style="left:34.5px;top:310.0px;width:29.0px;height:29.0px;" viewBox="0 0 512 512" fill="#111" preserveAspectRatio="xMidYMid meet"><path d="M481.7 240.1c-17.6-1.2-32.9 12-34.2 29.7-3.3 47-23.6 89.4-54.8 121L361 359c-6.9-6.9-17.2-8.9-26.2-5.2S320 366.3 320 376v112c0 13.3 10.7 24 24 24h112c9.7 0 18.5-5.8 22.2-14.8s1.7-19.3-5.2-26.2l-35-35c41.7-42.2 68.9-98.8 73.4-161.8 1.2-17.6-12-32.9-29.7-34.2zM39 41l35 35C32.3 118.2 5.1 174.8.6 237.8c-1.2 17.6 12 32.9 29.7 34.2s32.9-12 34.2-29.7c3.3-47 23.6-89.4 54.8-121L151 153c6.9 6.9 17.2 8.9 26.2 5.2S192 145.7 192 136V24c0-13.3-10.7-24-24-24H56c-9.7 0-18.5 5.8-22.2 14.8S32.2 34.1 39 41m201-10.7c-1.2 17.6 12 32.9 29.7 34.2 47 3.3 89.4 23.6 121 54.8L359 151c-6.9 6.9-8.9 17.2-5.2 26.2S366.3 192 376 192h112c13.3 0 24-10.7 24-24V56c0-9.7-5.8-18.5-14.8-22.2S477.9 32.2 471 39l-35 35C393.8 32.3 337.2 5.1 274.2.6c-17.6-1.2-32.9 12-34.2 29.7M41 473l35-35c42.2 41.7 98.8 68.9 161.8 73.4 17.6 1.2 32.9-12 34.2-29.7s-12-32.9-29.7-34.2c-47-3.3-89.4-23.6-121-54.8L153 361c6.9-6.9 8.9-17.2 5.2-26.2S145.7 320 136 320H24c-13.3 0-24 10.7-24 24v112c0 9.7 5.8 18.5 14.8 22.2s19.3 1.6 26.2-5.2"/></svg>
<svg class="ic" style="left:30px;top:396px;width:38px;height:38px" viewBox="0 0 38 38"><path d="M13 8 L16.5 18.5 L26 22 L16.5 25.5 L13 36 L9.500 25.5 L0.5 22 L9.500 18.500 Z" fill="none" stroke="#111" stroke-width="3" stroke-linejoin="round" transform="translate(3,1.500) scale(0.88)"/><path d="M29 0 L31 6 L37 8 L31 10 L29 16 L27 10 L21 8 L27 6 Z" fill="#111"/><path d="M29 22 L31 28 L37 30 L31 32 L29 38 L27 32 L21 30 L27 28 Z" fill="#111"/></svg>
<svg class="ic" style="left:27px;top:1748px;width:44px;height:36px" viewBox="0 0 44 36" fill="none" stroke="#111" stroke-width="3.2" stroke-linecap="round" stroke-linejoin="round"><circle cx="16" cy="9" r="7"/><path d="M2.500 33 C2.500 25 8 21.500 16 21.500 C24 21.500 29.500 25 29.500 33 Z"/><path d="M36 9 V20 M30.5 14.5 H41.500"/></svg>
<svg class="ic" style="left:31px;top:1838px;width:36px;height:36px" viewBox="0 0 36 36" fill="none" stroke="#111" stroke-width="3.2" stroke-linecap="round" stroke-linejoin="round"><path d="M2.500 12.500 H13 L30 3 V29 L13 21.500 H2.500 Z"/><path d="M7 21.500 V32 H13 V21.500"/><path d="M30 13 C33 13 33 19 30 19"/></svg>
<svg class="ic" style="left:33px;top:1928px;width:32px;height:36px" viewBox="0 0 32 36" fill="none" stroke="#111" stroke-width="3.2" stroke-linecap="round" stroke-linejoin="round"><path d="M2.500 28 V6 C2.500 3.500 4 2 6.500 2 H29.500 V26 H6.500 C4 26 2.500 27.500 2.500 30 C2.500 32.500 4 34 6.500 34 H29.500"/><path d="M11 10 H22 M11 16 H22"/></svg>
<svg class="ic" style="left:31px;top:2018px;width:36px;height:36px" viewBox="0 0 36 36" fill="none" stroke="#111" stroke-width="3.2" stroke-linecap="round" stroke-linejoin="round"><path d="M3 5 V13 H11"/><path d="M4 12 A15 15 0 1 1 8 30"/><path d="M18 10 V18 L23 23"/></svg>
<div class="b" style="left:40.0px;top:1948.0px;width:96.0px;height:96.0px;background:#5fcca3;border-radius:50%;box-shadow:0 0 30px rgba(0,0,0,.18);"></div>
<svg class="ic" style="left:66px;top:1971px;width:44px;height:50px" viewBox="0 0 44 50"><path d="M4 0 H40 Q43 0 43 3 V48 L30 43 H4 Q1 43 1 40 V3 Q1 0 4 0 Z" fill="#fff"/><path d="M8 31 Q22 40 36 31" fill="none" stroke="#5fcca3" stroke-width="2.6" stroke-linecap="round"/></svg>
<svg class="ic" style="left:0;top:2018px;width:3600px;height:40px" viewBox="0 2018 3600 40"><path d="M0 2022 Q1 2044 7 2058 L0 2058 Z M3600 2022 Q3599 2044 3594 2058 L3600 2058 Z" fill="#000"/></svg>
</div><script>(function(){var w=window.innerWidth;if(w&&Math.abs(w-3600)>2){var r=document.getElementById("root");r.style.transformOrigin="0 0";r.style.transform="scale("+(w/3600)+")";}})();</script></body></html>
